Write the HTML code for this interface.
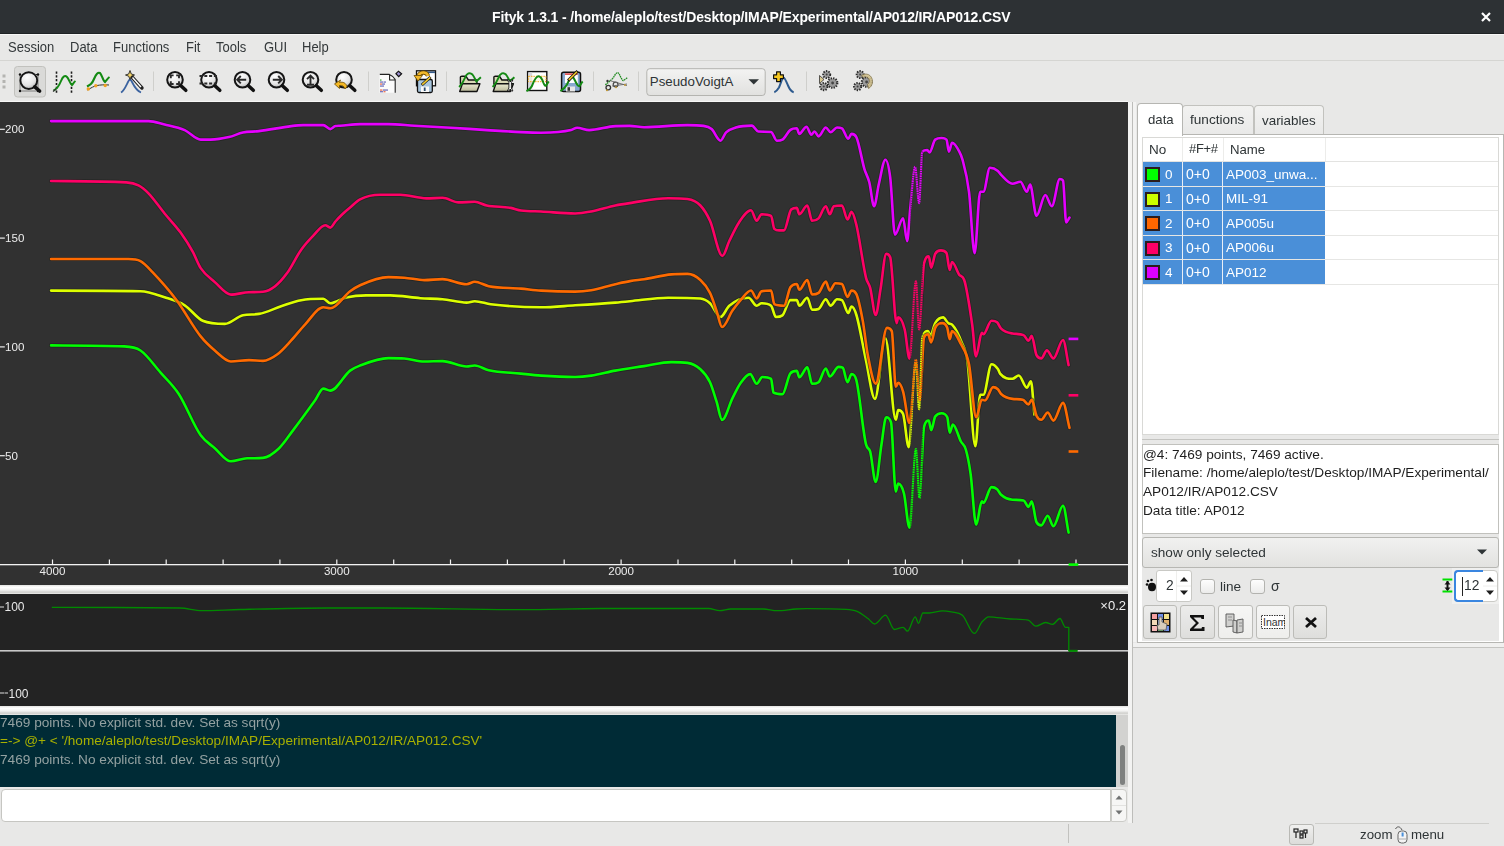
<!DOCTYPE html>
<html><head><meta charset="utf-8"><title>Fityk</title>
<style>
*{box-sizing:border-box;margin:0;padding:0}
html,body{width:1504px;height:846px;overflow:hidden;background:#e8e8e7;font-family:"Liberation Sans",sans-serif;color:#2e3436;position:relative}
.a{position:absolute;white-space:nowrap}
span.a{will-change:transform}
svg text{font-family:"Liberation Sans",sans-serif}
</style></head><body>
<div class="a" style="left:0px;top:0px;width:1504px;height:34px;background:#2d3134"></div>
<div class="a" style="left:0px;top:33px;width:1504px;height:1px;background:#1f2325"></div>
<div class="a" style="left:0px;top:34px;width:1504px;height:1px;background:#f7f7f6"></div>
<span class="a" style="left:492px;top:9.15px;font-size:14px;line-height:16.10px;color:#ffffff;font-weight:bold;letter-spacing:-0.13px;white-space:nowrap">Fityk 1.3.1 - /home/aleplo/test/Desktop/IMAP/Experimental/AP012/IR/AP012.CSV</span>
<svg class="a" style="left:1480px;top:11px" width="12" height="12"><path d="M2,2L10,10M10,2L2,10" stroke="#fff" stroke-width="2.2"/></svg>
<div class="a" style="left:0px;top:60px;width:1504px;height:1px;background:#d5d5d2"></div>
<span class="a" style="left:8px;top:41.27px;font-size:13px;line-height:14.95px;color:#33383a;transform:scaleY(1.14);transform-origin:0 11.98px;">Session</span>
<span class="a" style="left:69.5px;top:41.27px;font-size:13px;line-height:14.95px;color:#33383a;transform:scaleY(1.14);transform-origin:0 11.98px;">Data</span>
<span class="a" style="left:112.5px;top:41.27px;font-size:13px;line-height:14.95px;color:#33383a;transform:scaleY(1.14);transform-origin:0 11.98px;">Functions</span>
<span class="a" style="left:185.5px;top:41.27px;font-size:13px;line-height:14.95px;color:#33383a;transform:scaleY(1.14);transform-origin:0 11.98px;">Fit</span>
<span class="a" style="left:215.5px;top:41.27px;font-size:13px;line-height:14.95px;color:#33383a;transform:scaleY(1.14);transform-origin:0 11.98px;">Tools</span>
<span class="a" style="left:263.5px;top:41.27px;font-size:13px;line-height:14.95px;color:#33383a;transform:scaleY(1.14);transform-origin:0 11.98px;">GUI</span>
<span class="a" style="left:301.5px;top:41.27px;font-size:13px;line-height:14.95px;color:#33383a;transform:scaleY(1.14);transform-origin:0 11.98px;">Help</span>
<svg class="a" style="left:0;top:61px" width="900" height="40" viewBox="0 61 900 40">
<defs><radialGradient id="mg" cx="0.4" cy="0.3" r="0.8"><stop offset="0" stop-color="#ffffff"/><stop offset="0.6" stop-color="#e4e4e4"/><stop offset="1" stop-color="#a8a8a8"/></radialGradient>
<linearGradient id="fold" x1="0" y1="0" x2="0" y2="1"><stop offset="0" stop-color="#ecebd2"/><stop offset="1" stop-color="#b9b89a"/></linearGradient></defs>
<rect x="2.5" y="74.5" width="3" height="3" fill="#b4b4b1"/>
<rect x="2.5" y="80" width="3" height="3" fill="#b4b4b1"/>
<rect x="2.5" y="85.5" width="3" height="3" fill="#b4b4b1"/>
<rect x="14.5" y="66.5" width="31" height="30.5" rx="3" fill="#dadad8" stroke="#c1c1bd" stroke-width="1"/>
<path d="M20,74.5H38V91H20Z" fill="none" stroke="#222" stroke-width="1" stroke-dasharray="1,1"/>
<circle cx="28.8" cy="80.6" r="8.4" fill="url(#mg)" stroke="#151515" stroke-width="1.9"/>
<path d="M34.8,86.8L39.6,91" stroke="#111" stroke-width="3.6" stroke-linecap="round"/>
<circle cx="20" cy="74.5" r="1.2" fill="#111"/>
<circle cx="38" cy="74.5" r="1.2" fill="#111"/>
<circle cx="20" cy="91" r="1.2" fill="#111"/>
<circle cx="38" cy="91" r="1.2" fill="#111"/>
<path d="M56.5,71.5V93M71.5,71.5V93" stroke="#1b1b1b" stroke-width="1.6" stroke-dasharray="2.2,1.6"/>
<path d="M53.5,90.5C57,89 59,86 61,81 C63,76 65,75 67,77 C69,79 70,84 72,85 C73,84 74,82 75.5,81" fill="none" stroke="#138a13" stroke-width="2"/>
<path d="M53,91.5L56,89" stroke="#333" stroke-width="1.2"/>
<path d="M87,86.5C90,85 92,84 94,79 C96,74 98,72 100,73 C102,75 103,81 105,82 C106,81 108,78 109.5,77" fill="none" stroke="#138a13" stroke-width="2.1"/>
<path d="M87.5,90C91,88 94,86 97,85.5 C100,85 104,84.5 109,85" fill="none" stroke="#333" stroke-width="1"/>
<circle cx="88.3" cy="89" r="1.7" fill="#f0a020"/>
<circle cx="95.8" cy="85.8" r="1.7" fill="#f0a020"/>
<circle cx="105.2" cy="85.5" r="1.7" fill="#f0a020"/>
<path d="M121,92.5C124,91 126,86 128,82 C129,79 131,79 132,82 C134,86 137,91 141,92.5" fill="none" stroke="#3b63a0" stroke-width="1.8"/>
<path d="M131.5,76.5L142,88" stroke="#222" stroke-width="3.4" stroke-linecap="round"/><path d="M132.5,77.5L141,87" stroke="#fff" stroke-width="1.4"/>
<path d="M130,70.5L131.3,74 L134.5,75 L131.3,76.2 L130,79.5 L128.7,76.2 L125.5,75 L128.7,74Z" fill="#f6d66a" stroke="#222" stroke-width="0.9"/>
<rect x="153.0" y="71.5" width="1" height="19.5" fill="#cfcfcc"/>
<rect x="368.0" y="71.5" width="1" height="19.5" fill="#cfcfcc"/>
<rect x="446.0" y="71.5" width="1" height="19.5" fill="#cfcfcc"/>
<rect x="593.0" y="71.5" width="1" height="19.5" fill="#cfcfcc"/>
<rect x="638.0" y="71.5" width="1" height="19.5" fill="#cfcfcc"/>
<rect x="806.0" y="71.5" width="1" height="19.5" fill="#cfcfcc"/>
<circle cx="175" cy="79.7" r="7.8" fill="url(#mg)" stroke="#151515" stroke-width="2"/>
<path d="M180.9,85.7L185.8,90.3" stroke="#111" stroke-width="3.5" stroke-linecap="round"/><path d="M170.8,78.2v-2.8h2.8M176.2,75.4h2.8v2.8M179,81.2v2.8h-2.8M173.6,84h-2.8v-2.8" fill="none" stroke="#2a2a2a" stroke-width="1.9"/>
<circle cx="209" cy="79.7" r="7.8" fill="url(#mg)" stroke="#151515" stroke-width="2"/>
<path d="M214.9,85.7L219.8,90.3" stroke="#111" stroke-width="3.5" stroke-linecap="round"/><path d="M199.5,76H218.5M199.5,83.5H218.5" stroke="#2a2a2a" stroke-width="1.8" stroke-dasharray="3,1.8"/>
<circle cx="242.5" cy="79.7" r="7.8" fill="url(#mg)" stroke="#151515" stroke-width="2"/>
<path d="M248.4,85.7L253.3,90.3" stroke="#111" stroke-width="3.5" stroke-linecap="round"/><path d="M246.2,79.7H237.2M240.8,76l-3.6,3.7l3.6,3.7" fill="none" stroke="#2a2a2a" stroke-width="1.9"/>
<circle cx="276.5" cy="79.7" r="7.8" fill="url(#mg)" stroke="#151515" stroke-width="2"/>
<path d="M282.4,85.7L287.3,90.3" stroke="#111" stroke-width="3.5" stroke-linecap="round"/><path d="M272.8,79.7H281.8M278.2,76l3.6,3.7l-3.6,3.7" fill="none" stroke="#2a2a2a" stroke-width="1.9"/>
<circle cx="310.5" cy="79.7" r="7.8" fill="url(#mg)" stroke="#151515" stroke-width="2"/>
<path d="M316.4,85.7L321.3,90.3" stroke="#111" stroke-width="3.5" stroke-linecap="round"/><path d="M310.5,84.5V75.8M307,79.2l3.5,-3.5l3.5,3.5M307,84.8h7" fill="none" stroke="#2a2a2a" stroke-width="1.9"/>
<circle cx="344" cy="79.7" r="7.8" fill="url(#mg)" stroke="#151515" stroke-width="2"/>
<path d="M349.9,85.7L354.8,90.3" stroke="#111" stroke-width="3.5" stroke-linecap="round"/><path d="M347,86.5C346,83 343,81.5 339.5,82.5L340.5,80L334.5,84L339.5,88.5L339.5,85.5C342,85 344,86 345,89Z" fill="#f4b824" stroke="#6b4a00" stroke-width="0.8"/>
<path d="M379.5,74.5H389.5C392,75.5 394,77 395.2,79.5V92.8H379.5Z" fill="#fbfbfb"/>
<path d="M379.8,74.4H389.4C392,75.5 394,77 395.2,79.5V92.8M389.6,74.6V80H395.2" fill="none" stroke="#222" stroke-width="1.1"/>
<rect x="380" y="79.5" width="1.5" height="1.1" fill="#2a9a2a"/>
<rect x="380" y="81.5" width="3.5" height="1.1" fill="#5a5ab0"/>
<rect x="384" y="81.5" width="2" height="1.1" fill="#5a5ab0"/>
<rect x="380" y="83.5" width="2" height="1.1" fill="#e85a30"/>
<rect x="382" y="83.5" width="3" height="1.1" fill="#5a5ab0"/>
<rect x="380" y="85.5" width="4" height="1.1" fill="#5a5ab0"/>
<rect x="380" y="89.5" width="2.5" height="1.1" fill="#e85a30"/>
<rect x="383" y="89.5" width="5" height="1.1" fill="#5a5ab0"/>
<rect x="380" y="91.2" width="3" height="1.1" fill="#5a5ab0"/>
<rect x="383.5" y="91.2" width="2" height="1.1" fill="#e85a30"/>
<path d="M396,73.7L398.5,71.2L401.6,73.7L398.7,76.6Z" fill="#9b8fd0" stroke="#111" stroke-width="1.2"/>
<rect x="416.5" y="70.8" width="19" height="15" fill="#fff" stroke="#111" stroke-width="1.3"/><rect x="427" y="71.5" width="8" height="1.6" fill="#345a8a"/>
<rect x="417.5" y="79.5" width="14.8" height="13" rx="1.5" fill="#a9c6de" stroke="#111" stroke-width="1.3"/><rect x="421" y="86.5" width="8" height="5.5" fill="#fafafa"/><rect x="423.8" y="87.5" width="1.8" height="3.5" fill="#2a4a6a"/>
<path d="M428,76C427,72 421,71 418.5,75.5" fill="none" stroke="#6a4a00" stroke-width="4.2"/><path d="M428,76C427,72 421,71 418.5,75.5" fill="none" stroke="#f2b92a" stroke-width="2.6"/><path d="M414,75.5L422.5,75.5L418,81Z" fill="#f2b92a" stroke="#6a4a00" stroke-width="0.8"/>
<path d="M421.8,85L430.5,77" stroke="#111" stroke-width="3"/><path d="M422.2,84.6L430.2,77.4" stroke="#f5cc30" stroke-width="1.6"/>
<path d="M460.4,77Q460.4,76.2 461.9,76.2H465.9L468.4,80H476.9V84H460.4Z" fill="#d9d8b6" stroke="#111" stroke-width="1.4" stroke-linejoin="round"/><path d="M462.4,83.7H479.9L476.9,91.5H459.7Z" fill="url(#fold)" stroke="#111" stroke-width="1.4" stroke-linejoin="round"/><path d="M459.09999999999997,87C460.9,85 462.9,83 464.9,78 C466.9,73 469.9,72 472.4,74.5 C474.4,77 475.4,80 476.4,81.4 C477.9,80 479.4,78.5 480.9,77.3" fill="none" stroke="#148a14" stroke-width="2"/>
<path d="M493.9,77Q493.9,76.2 495.4,76.2H499.4L501.9,80H510.4V84H493.9Z" fill="#d9d8b6" stroke="#111" stroke-width="1.4" stroke-linejoin="round"/><path d="M495.9,83.7H513.4L510.4,91.5H493.2Z" fill="url(#fold)" stroke="#111" stroke-width="1.4" stroke-linejoin="round"/><path d="M492.59999999999997,87C494.4,85 496.4,83 498.4,78 C500.4,73 503.4,72 505.9,74.5 C507.9,77 508.9,80 509.9,81.4 C511.4,80 512.9,78.5 514.4,77.3" fill="none" stroke="#148a14" stroke-width="2"/><path d="M507.4,80L508.9,82.5V88L507.4,91H508.9L510.2,89L511.4,91H512.9L511.4,88V82.5L512.9,80H511.4L510.2,82L508.9,80Z" fill="#fff" stroke="#111" stroke-width="0.9"/>
<rect x="527.6" y="71.6" width="19.2" height="18.9" fill="#fff" stroke="#111" stroke-width="1.4"/><rect x="528.4" y="72.4" width="3.8" height="17.3" fill="#d8d8dc"/>
<rect x="528.4" y="76.3" width="17.6" height="5.4" fill="#fff6d8" fill-opacity="0.5" stroke="#f0a818" stroke-width="1" stroke-dasharray="1.5,1"/>
<path d="M526.4,91.2C529,90 530.5,89 532,86 C533.5,82 535.5,76 538.8,76.2 C541,76.5 542.5,80 543.5,83 C544.5,85.5 545.5,86 546,85.6 C547,84.5 548,82.5 548.7,81.4" fill="none" stroke="#148a14" stroke-width="2"/>
<rect x="561.6" y="72.3" width="18.9" height="19.3" rx="2" fill="#88a8d0" stroke="#111" stroke-width="1.5"/><rect x="565" y="73.2" width="12.8" height="9.8" fill="#fff"/><rect x="565" y="73.2" width="12.8" height="1.8" fill="#e05a5a"/><rect x="566" y="86.5" width="9" height="5" fill="#e8e8e8"/><rect x="567.5" y="87.2" width="2.5" height="3.6" fill="#333"/>
<path d="M560.4,91.2C563,89.5 565,88 567,84.5 C569,80 571,77 572.5,77 C574,77.5 575,81 576.5,83.5 C577.5,85.5 578.5,86.5 579.5,86 C580.5,85 581.5,82.5 582.7,81.4" fill="none" stroke="#148a14" stroke-width="2"/>
<path d="M568.1,80.6L577.6,71.1" stroke="#111" stroke-width="3"/><path d="M568.8,79.9L577,71.7" stroke="#f5c828" stroke-width="1.5"/>
<path d="M605.4,85C608,82.5 610,81 612.7,78.4 C614.5,76 616,72.6 617.8,72.6 C619.5,73 621,79 623,80.6 C624.5,80 626,78.5 627.7,77.7" fill="none" stroke="#1e8a1e" stroke-width="1.3" stroke-dasharray="1.6,0.6"/>
<circle cx="608.3" cy="87.6" r="2.3" fill="none" stroke="#333" stroke-width="1.3"/><circle cx="615.6" cy="84.5" r="2.4" fill="none" stroke="#444" stroke-width="1.2"/><path d="M609.5,80.5L627,85.5M612,86L627,84" stroke="#666" stroke-width="0.9"/><circle cx="607.5" cy="81" r="1.2" fill="#333"/>
<rect x="606" y="89.5" width="2" height="1.6" fill="#c09a40"/><rect x="624" y="84.2" width="2" height="1.6" fill="#c09a40"/><rect x="615" y="86.5" width="2" height="1.6" fill="#c09a40"/>
<rect x="646.8" y="68.7" width="118.4" height="26.8" rx="3" fill="url(#cmb)" stroke="#b4b4b0" stroke-width="1"/>
<defs><linearGradient id="cmb" x1="0" y1="0" x2="0" y2="1"><stop offset="0" stop-color="#f3f3f2"/><stop offset="1" stop-color="#e1e1df"/></linearGradient></defs>
<text x="649.8" y="86.2" font-size="13.3" fill="#2e3436">PseudoVoigtA</text>
<path d="M748.5,79.2h10.5l-5.25,5.2z" fill="#2e3436"/>
<path d="M774.3,92.2C776.5,91.5 777.5,90 779,87.5 C780.5,84.5 782,78 783.6,77.6 C785,78 786.5,82 788,85.5 C789.5,89 791.5,91.8 793.7,92.2" fill="none" stroke="#2d5a8e" stroke-width="2"/>
<path d="M776.6,71.8h3.8v3h3v3.8h-3v3h-3.8v-3h-3v-3.8h3z" fill="#f6c820" stroke="#111" stroke-width="1.2" stroke-linejoin="round"/>
<path d="M819.5,75.5L824,79.5L819.5,83.5Z" fill="#d8c890" stroke="#333" stroke-width="0.8"/>
<circle cx="826.7" cy="74.6" r="3.3" fill="#8c8c8c" stroke="#2a2a2a" stroke-width="2.4" stroke-dasharray="1.3,1.1"/><circle cx="826.7" cy="74.6" r="2.64" fill="#9a9a9a"/><circle cx="826.7" cy="74.6" r="0.99" fill="#444"/><circle cx="823.8" cy="86.6" r="3.4" fill="#8c8c8c" stroke="#2a2a2a" stroke-width="2.4" stroke-dasharray="1.3,1.1"/><circle cx="823.8" cy="86.6" r="2.72" fill="#9a9a9a"/><circle cx="823.8" cy="86.6" r="1.02" fill="#444"/><circle cx="832.6" cy="83" r="4.6" fill="#8c8c8c" stroke="#2a2a2a" stroke-width="2.4" stroke-dasharray="1.3,1.1"/><circle cx="832.6" cy="83" r="3.68" fill="#9a9a9a"/><circle cx="832.6" cy="83" r="1.38" fill="#444"/>
<circle cx="860.2" cy="74.6" r="3.3" fill="#8c8c8c" stroke="#2a2a2a" stroke-width="2.4" stroke-dasharray="1.3,1.1"/><circle cx="860.2" cy="74.6" r="2.64" fill="#9a9a9a"/><circle cx="860.2" cy="74.6" r="0.99" fill="#444"/><circle cx="857.6" cy="86.6" r="3.4" fill="#8c8c8c" stroke="#2a2a2a" stroke-width="2.4" stroke-dasharray="1.3,1.1"/><circle cx="857.6" cy="86.6" r="2.72" fill="#9a9a9a"/><circle cx="857.6" cy="86.6" r="1.02" fill="#444"/><circle cx="866.6" cy="82" r="4.6" fill="#8c8c8c" stroke="#2a2a2a" stroke-width="2.4" stroke-dasharray="1.3,1.1"/><circle cx="866.6" cy="82" r="3.68" fill="#9a9a9a"/><circle cx="866.6" cy="82" r="1.38" fill="#444"/>
<path d="M861.5,75.5C866,72 872.5,75 872.5,81.5 C872.5,85 870.5,87.5 868.5,88.5L867.5,84.5C869.5,83 870,80.5 868.5,78.5 C867,76.5 864.5,76.5 863,77.5Z" fill="#d2c290" fill-opacity="0.9" stroke="#6a5a30" stroke-width="0.6"/>
</svg>
<div class="a" style="left:0px;top:101px;width:1128px;height:1px;background:#f6f6f5"></div>
<div class="a" style="left:0px;top:102px;width:1128px;height:483px;background:#313131"></div>
<div class="a" style="left:0px;top:585px;width:1128px;height:9px;background:linear-gradient(#e2e2e0,#ffffff 25%,#f2f2f1 55%,#cfcfcc 80%,#ededeb)"></div>
<div class="a" style="left:0px;top:594px;width:1128px;height:112px;background:#232323"></div>
<div class="a" style="left:0px;top:706px;width:1128px;height:9px;background:linear-gradient(#e2e2e0,#ffffff 25%,#f2f2f1 55%,#cfcfcc 80%,#ededeb)"></div>
<div class="a" style="left:0px;top:715px;width:1116px;height:72px;background:#002b36"></div>
<span class="a" style="left:0px;top:714.77px;font-size:13.65px;line-height:15.70px;color:#93a1a1;white-space:nowrap">7469 points. No explicit std. dev. Set as sqrt(y)</span>
<span class="a" style="left:0px;top:733.22px;font-size:13.6px;line-height:15.64px;color:#a7b000;white-space:nowrap">=-&gt; @+ &lt; '/home/aleplo/test/Desktop/IMAP/Experimental/AP012/IR/AP012.CSV'</span>
<span class="a" style="left:0px;top:751.97px;font-size:13.65px;line-height:15.70px;color:#93a1a1;white-space:nowrap">7469 points. No explicit std. dev. Set as sqrt(y)</span>
<div class="a" style="left:1116px;top:715px;width:12px;height:72px;background:#d2d2d0"></div>
<div class="a" style="left:1120px;top:745px;width:5px;height:40px;background:#7e807f;border-radius:3px"></div>
<div class="a" style="left:1px;top:789px;width:1110px;height:33px;background:#fff;border:1px solid #c6c6c2;border-radius:4px 0 0 4px"></div>
<div class="a" style="left:1111px;top:789px;width:16px;height:33px;background:#f6f6f5;border:1px solid #cbcbc7;border-radius:0 4px 4px 0"></div>
<svg class="a" style="left:1111px;top:789px" width="16" height="33"><path d="M4.5,10.5h7l-3.5,-4z M4.5,21.5h7l-3.5,4z" fill="#707272"/><path d="M1,16.5h14" stroke="#e2e2e0" stroke-width="1"/></svg>
<div class="a" style="left:1128px;top:102px;width:4px;height:721px;background:#f3f3f2"></div>
<div class="a" style="left:1132px;top:102px;width:1px;height:721px;background:#bdbdba"></div>
<div class="a" style="left:1133px;top:102px;width:3px;height:540px;background:#f3f3f2"></div>
<div class="a" style="left:1068px;top:824px;width:1px;height:19px;background:#c2c2bf"></div>
<div class="a" style="left:1315px;top:822.5px;width:174px;height:1.2px;background:#cfcfcc"></div>
<div class="a" style="left:1288.5px;top:823.5px;width:25px;height:21px;background:linear-gradient(#f0f0ef,#dcdcda);border:1px solid #b9b9b5;border-radius:3px"></div>
<svg class="a" style="left:1292px;top:828px" width="18" height="12"><g fill="none" stroke="#222" stroke-width="1.2"><rect x="2" y="1" width="4" height="3"/><path d="M4,4v6"/><rect x="8" y="3" width="3" height="3"/><rect x="8" y="7" width="3" height="3"/><rect x="12" y="2" width="3" height="3"/><path d="M13.5,5v5"/></g></svg>
<span class="a" style="left:1359.7px;top:826.59px;font-size:13.3px;line-height:15.29px;color:#2e3436;">zoom</span>
<span class="a" style="left:1411px;top:826.59px;font-size:13.3px;line-height:15.29px;color:#2e3436;">menu</span>
<svg class="a" style="left:1394px;top:826px" width="15" height="18"><path d="M1.5,3 C3,0 6,0 8,4" fill="none" stroke="#555" stroke-width="1"/><rect x="4" y="5" width="9" height="12" rx="3.5" fill="#f4f4f4" stroke="#666" stroke-width="1"/><rect x="7.6" y="6.5" width="2" height="4" fill="#4a90d9"/><path d="M4.5,13h8" stroke="#999" stroke-width="0.8"/></svg>
<div class="a" style="left:1137px;top:134px;width:367px;height:509px;background:#fff;border:1px solid #b6b6b2"></div>
<div class="a" style="left:1142px;top:137px;width:357px;height:504px;background:#e8e8e7"></div>
<div class="a" style="left:1182px;top:105px;width:72px;height:29px;background:linear-gradient(#f2f2f1,#e9e9e8);border:1px solid #c2c2be;border-bottom:none;border-radius:4px 4px 0 0"></div>
<div class="a" style="left:1254px;top:105px;width:70px;height:29px;background:linear-gradient(#f2f2f1,#e9e9e8);border:1px solid #c2c2be;border-bottom:none;border-radius:4px 4px 0 0"></div>
<div class="a" style="left:1137px;top:103px;width:46px;height:33px;background:#fff;border:1px solid #b6b6b2;border-bottom:none;border-radius:4px 4px 0 0"></div>
<span class="a" style="left:1148.4px;top:112.09px;font-size:13.2px;line-height:15.18px;color:#2e3436;">data</span>
<span class="a" style="left:1190.4px;top:112.22px;font-size:13.6px;line-height:15.64px;color:#2e3436;">functions</span>
<span class="a" style="left:1262.4px;top:112.80px;font-size:13.4px;line-height:15.41px;color:#2e3436;">variables</span>
<div class="a" style="left:1142px;top:137px;width:357px;height:298px;background:#fff;border:1px solid #d9d9d6"></div>
<div class="a" style="left:1143px;top:161px;width:355px;height:1px;background:#e3e3e1"></div>
<div class="a" style="left:1182px;top:138px;width:1px;height:23px;background:#ececea"></div>
<div class="a" style="left:1223px;top:138px;width:1px;height:23px;background:#ececea"></div>
<div class="a" style="left:1325px;top:138px;width:1px;height:23px;background:#ececea"></div>
<span class="a" style="left:1148.8px;top:141.61px;font-size:13.5px;line-height:15.52px;color:#2e3436;">No</span>
<span class="a" style="left:1189.4px;top:142.07px;font-size:13.0px;line-height:14.95px;color:#2e3436;letter-spacing:-0.3px">#F+#</span>
<span class="a" style="left:1229.8px;top:141.89px;font-size:13.2px;line-height:15.18px;color:#2e3436;">Name</span>
<div class="a" style="left:1143px;top:162px;width:182px;height:23.5px;background:#4a8fd8"></div>
<div class="a" style="left:1143px;top:185.5px;width:355px;height:1px;background:#e6e6e4"></div>
<div class="a" style="left:1181.5px;top:162px;width:1.2px;height:23.5px;background:#e8eef6"></div>
<div class="a" style="left:1222.2px;top:162px;width:1.2px;height:23.5px;background:#e8eef6"></div>
<div class="a" style="left:1145px;top:167px;width:15px;height:15px;background:#00ff00;border:2px solid #2b1c1c"></div>
<span class="a" style="left:1164.8px;top:166.51px;font-size:13.5px;line-height:15.52px;color:#ffffff;">0</span>
<span class="a" style="left:1185.8px;top:166.05px;font-size:14px;line-height:16.10px;color:#ffffff;">0+0</span>
<span class="a" style="left:1226px;top:166.51px;font-size:13.5px;line-height:15.52px;color:#ffffff;">AP003_unwa...</span>
<div class="a" style="left:1143px;top:186.5px;width:182px;height:23.5px;background:#4a8fd8"></div>
<div class="a" style="left:1143px;top:210.0px;width:355px;height:1px;background:#e6e6e4"></div>
<div class="a" style="left:1181.5px;top:186.5px;width:1.2px;height:23.5px;background:#e8eef6"></div>
<div class="a" style="left:1222.2px;top:186.5px;width:1.2px;height:23.5px;background:#e8eef6"></div>
<div class="a" style="left:1145px;top:191.5px;width:15px;height:15px;background:#ccff00;border:2px solid #2b1c1c"></div>
<span class="a" style="left:1164.8px;top:191.01px;font-size:13.5px;line-height:15.52px;color:#ffffff;">1</span>
<span class="a" style="left:1185.8px;top:190.55px;font-size:14px;line-height:16.10px;color:#ffffff;">0+0</span>
<span class="a" style="left:1226px;top:191.01px;font-size:13.5px;line-height:15.52px;color:#ffffff;">MIL-91</span>
<div class="a" style="left:1143px;top:211px;width:182px;height:23.5px;background:#4a8fd8"></div>
<div class="a" style="left:1143px;top:234.5px;width:355px;height:1px;background:#e6e6e4"></div>
<div class="a" style="left:1181.5px;top:211px;width:1.2px;height:23.5px;background:#e8eef6"></div>
<div class="a" style="left:1222.2px;top:211px;width:1.2px;height:23.5px;background:#e8eef6"></div>
<div class="a" style="left:1145px;top:216px;width:15px;height:15px;background:#ff6600;border:2px solid #2b1c1c"></div>
<span class="a" style="left:1164.8px;top:215.51px;font-size:13.5px;line-height:15.52px;color:#ffffff;">2</span>
<span class="a" style="left:1185.8px;top:215.05px;font-size:14px;line-height:16.10px;color:#ffffff;">0+0</span>
<span class="a" style="left:1226px;top:215.51px;font-size:13.5px;line-height:15.52px;color:#ffffff;">AP005u</span>
<div class="a" style="left:1143px;top:235.5px;width:182px;height:23.5px;background:#4a8fd8"></div>
<div class="a" style="left:1143px;top:259.0px;width:355px;height:1px;background:#e6e6e4"></div>
<div class="a" style="left:1181.5px;top:235.5px;width:1.2px;height:23.5px;background:#e8eef6"></div>
<div class="a" style="left:1222.2px;top:235.5px;width:1.2px;height:23.5px;background:#e8eef6"></div>
<div class="a" style="left:1145px;top:240.5px;width:15px;height:15px;background:#ff0066;border:2px solid #2b1c1c"></div>
<span class="a" style="left:1164.8px;top:240.01px;font-size:13.5px;line-height:15.52px;color:#ffffff;">3</span>
<span class="a" style="left:1185.8px;top:239.55px;font-size:14px;line-height:16.10px;color:#ffffff;">0+0</span>
<span class="a" style="left:1226px;top:240.01px;font-size:13.5px;line-height:15.52px;color:#ffffff;">AP006u</span>
<div class="a" style="left:1143px;top:260px;width:182px;height:23.5px;background:#4a8fd8"></div>
<div class="a" style="left:1143px;top:283.5px;width:355px;height:1px;background:#e6e6e4"></div>
<div class="a" style="left:1181.5px;top:260px;width:1.2px;height:23.5px;background:#e8eef6"></div>
<div class="a" style="left:1222.2px;top:260px;width:1.2px;height:23.5px;background:#e8eef6"></div>
<div class="a" style="left:1145px;top:265px;width:15px;height:15px;background:#dd00ff;border:2px solid #2b1c1c"></div>
<span class="a" style="left:1164.8px;top:264.51px;font-size:13.5px;line-height:15.52px;color:#ffffff;">4</span>
<span class="a" style="left:1185.8px;top:264.05px;font-size:14px;line-height:16.10px;color:#ffffff;">0+0</span>
<span class="a" style="left:1226px;top:264.51px;font-size:13.5px;line-height:15.52px;color:#ffffff;">AP012</span>
<div class="a" style="left:1142px;top:439px;width:357px;height:1px;background:#c4c4c1"></div>
<div class="a" style="left:1142px;top:444px;width:357px;height:90px;background:#fff;border:1px solid #c1c1bd"></div>
<span class="a" style="left:1143px;top:446.57px;font-size:13.65px;line-height:15.70px;color:#1e1e1e;white-space:nowrap">@4: 7469 points, 7469 active.</span>
<span class="a" style="left:1143px;top:465.37px;font-size:13.65px;line-height:15.70px;color:#1e1e1e;white-space:nowrap">Filename: /home/aleplo/test/Desktop/IMAP/Experimental/</span>
<span class="a" style="left:1143px;top:483.97px;font-size:13.65px;line-height:15.70px;color:#1e1e1e;white-space:nowrap">AP012/IR/AP012.CSV</span>
<span class="a" style="left:1143px;top:502.57px;font-size:13.65px;line-height:15.70px;color:#1e1e1e;white-space:nowrap">Data title: AP012</span>
<div class="a" style="left:1142px;top:536.5px;width:357px;height:31px;background:linear-gradient(#f1f1f0,#e2e2e0);border:1px solid #b7b7b3;border-radius:3px"></div>
<span class="a" style="left:1150.6px;top:545.12px;font-size:13.6px;line-height:15.64px;color:#2e3436;">show only selected</span>
<svg class="a" style="left:1476px;top:548px" width="12" height="8"><path d="M1,1.5h10l-5,5z" fill="#2e3436"/></svg>
<svg class="a" style="left:1145px;top:578px" width="12" height="15"><circle cx="3" cy="3" r="1.3" fill="#111"/><circle cx="6.5" cy="2" r="1.3" fill="#111"/><circle cx="2" cy="6.5" r="1.3" fill="#111"/><ellipse cx="7" cy="9" rx="4" ry="4.2" fill="#111"/></svg>
<div class="a" style="left:1156px;top:570px;width:36px;height:32px;background:#fff;border:1px solid #c9c9c5;border-radius:3px"></div>
<div class="a" style="left:1176px;top:571px;width:1px;height:30px;background:#efefed"></div>
<span class="a" style="left:1166px;top:578.33px;font-size:13.8px;line-height:15.87px;color:#2e3436;">2</span>
<svg class="a" style="left:1177px;top:571px" width="14" height="30"><path d="M3,10.5h8l-4,-4.5z M3,19.5h8l-4,4.5z" fill="#1e1e1e"/><path d="M0,15h14" stroke="#eeeeec"/></svg>
<div class="a" style="left:1199.5px;top:578.5px;width:15px;height:15px;background:linear-gradient(#fdfdfd,#ececeb);border:1px solid #b3b3af;border-radius:3px"></div>
<span class="a" style="left:1220.3px;top:578.82px;font-size:13.6px;line-height:15.64px;color:#2e3436;">line</span>
<div class="a" style="left:1250px;top:578.5px;width:15px;height:15px;background:linear-gradient(#fdfdfd,#ececeb);border:1px solid #b3b3af;border-radius:3px"></div>
<span class="a" style="left:1270.5px;top:578.45px;font-size:14px;line-height:16.10px;color:#2e3436;">σ</span>
<svg class="a" style="left:1442px;top:578px" width="11" height="16"><path d="M0.5,1.5h10M0.5,13.5h10" stroke="#00e000" stroke-width="2.2"/><path d="M5.5,3v9" stroke="#111" stroke-width="2"/><path d="M2.5,6.5l3,-3.5l3,3.5z M2.5,9.5l3,3.5l3,-3.5z" fill="#111"/></svg>
<div class="a" style="left:1452px;top:568px;width:47px;height:36px;background:#fff;opacity:0.35"></div>
<div class="a" style="left:1453.5px;top:570px;width:44.5px;height:32px;background:#fff;border:1px solid #cacac6;border-radius:4px"></div>
<div class="a" style="left:1453.5px;top:570px;width:29px;height:32px;border:2px solid #3a86e0;border-right:none;border-radius:4px 0 0 4px"></div>
<div class="a" style="left:1462.2px;top:577px;width:1.2px;height:19px;background:#222"></div>
<span class="a" style="left:1463.5px;top:578.33px;font-size:13.8px;line-height:15.87px;color:#2e3436;">12</span>
<svg class="a" style="left:1483px;top:571px" width="14" height="30"><path d="M3,10.5h8l-4,-4.5z M3,19.5h8l-4,4.5z" fill="#1e1e1e"/><path d="M0,15h14" stroke="#eeeeec"/></svg>
<div class="a" style="left:1142.8px;top:604.8px;width:34.6px;height:34.6px;background:linear-gradient(#ececeb,#dededc);border:1px solid #bcbcb8;border-radius:3px"></div>
<div class="a" style="left:1180px;top:604.8px;width:34.8px;height:34.6px;background:linear-gradient(#ececeb,#dededc);border:1px solid #bcbcb8;border-radius:3px"></div>
<div class="a" style="left:1217.7px;top:604.8px;width:34.9px;height:34.6px;background:linear-gradient(#f6f6f5,#eeeeec);border:1px solid #bcbcb8;border-radius:3px"></div>
<div class="a" style="left:1255.6px;top:604.8px;width:34.7px;height:34.6px;background:linear-gradient(#f6f6f5,#eeeeec);border:1px solid #bcbcb8;border-radius:3px"></div>
<div class="a" style="left:1293.1px;top:604.8px;width:34.4px;height:34.6px;background:linear-gradient(#ececeb,#dededc);border:1px solid #bcbcb8;border-radius:3px"></div>
<svg class="a" style="left:1150px;top:612px" width="22" height="22"><rect x="0.5" y="0.5" width="20" height="20" fill="#111"/>
<rect x="2" y="2" width="5" height="5" fill="#f4a0a0"/><rect x="8" y="2" width="5" height="5" fill="#6f8fe8"/><rect x="14" y="2" width="5" height="5" fill="#f2e08a"/>
<rect x="2" y="8" width="5" height="5" fill="#f2d8b8"/><rect x="8" y="8" width="5" height="5" fill="#a6b6e6"/><rect x="14" y="8" width="5" height="5" fill="#e0b070"/>
<rect x="2" y="14" width="5" height="5" fill="#f6b8b8"/><rect x="8" y="14" width="5" height="5" fill="#70c070"/><rect x="14" y="14" width="5" height="5" fill="#6f8fe8"/>
<path d="M9,5 v8 l-2,0 l1,5 h8 l1,-6 l-5,-2 v-5z" fill="#d8cdbd" stroke="#555" stroke-width="0.8"/></svg>
<svg class="a" style="left:1187px;top:613px" width="20" height="20"><path d="M3,2h14v4h-2.5l-0.5,-1.5h-7.5l5.5,5.5l-5.5,5.5h8l0.5,-1.5h2.5v4h-14.5v-2l6,-6l-6,-6z" fill="#111"/></svg>
<svg class="a" style="left:1224px;top:611px" width="22" height="24"><g fill="#d0d0ce" stroke="#555" stroke-width="0.9"><path d="M2,3l8,0l0,12l-8,1z"/><path d="M9,9l4,1l0,12l-4,-1z"/><path d="M13,9l6,-1l0,13l-6,1z"/></g><path d="M4,6h4M4,9h4M15,12h3M15,15h3" stroke="#777" stroke-width="0.7"/></svg>
<svg class="a" style="left:1261px;top:614px" width="24" height="16"><rect x="0.5" y="1.5" width="23" height="13" fill="#fff" stroke="#333" stroke-width="1" stroke-dasharray="1.5,1"/><text x="2" y="12" font-size="10.5" font-family="Liberation Serif" fill="#333">Inam</text></svg>
<svg class="a" style="left:1304px;top:616px" width="14" height="13"><path d="M2,2L12,11M12,2L2,11" stroke="#111" stroke-width="2.8"/></svg>
<div class="a" style="left:1133px;top:643px;width:371px;height:4px;background:#f0f0ef"></div>
<div class="a" style="left:1133px;top:647px;width:371px;height:1px;background:#c4c4c1"></div>
<svg class="a" style="left:0;top:0" width="1128" height="710" viewBox="0 0 1128 710">
<defs><clipPath id="cpa"><path d="M0,0H910.5V710H0Z M922.8,0H1128V710H922.8Z"/></clipPath><clipPath id="cpb"><rect x="910.5" y="0" width="12.3" height="710"/></clipPath></defs>
<rect x="0" y="564" width="1128" height="1.3" fill="#f2f2f2"/>
<path d="M52.5,559.6v4.5M109.4,559.6v4.5M166.2,559.6v4.5M223.1,559.6v4.5M279.9,559.6v4.5M336.8,559.6v4.5M393.7,559.6v4.5M450.5,559.6v4.5M507.4,559.6v4.5M564.2,559.6v4.5M621.1,559.6v4.5M678.0,559.6v4.5M734.8,559.6v4.5M791.7,559.6v4.5M848.5,559.6v4.5M905.4,559.6v4.5M962.3,559.6v4.5M1019.1,559.6v4.5M1076.0,559.6v4.5" stroke="#f2f2f2" stroke-width="1.2" fill="none"/>
<text x="52.5" y="575" text-anchor="middle" font-size="11.6" fill="#ececec" font-family="Liberation Sans">4000</text>
<text x="336.8" y="575" text-anchor="middle" font-size="11.6" fill="#ececec" font-family="Liberation Sans">3000</text>
<text x="621.1" y="575" text-anchor="middle" font-size="11.6" fill="#ececec" font-family="Liberation Sans">2000</text>
<text x="905.4" y="575" text-anchor="middle" font-size="11.6" fill="#ececec" font-family="Liberation Sans">1000</text>
<rect x="0" y="128.7" width="4.8" height="1.2" fill="#ececec"/>
<text x="5" y="133.4" font-size="11.6" fill="#ececec" font-family="Liberation Sans">200</text>
<rect x="0" y="237.5" width="4.8" height="1.2" fill="#ececec"/>
<text x="5" y="242.2" font-size="11.6" fill="#ececec" font-family="Liberation Sans">150</text>
<rect x="0" y="346.3" width="4.8" height="1.2" fill="#ececec"/>
<text x="5" y="351.0" font-size="11.6" fill="#ececec" font-family="Liberation Sans">100</text>
<rect x="0" y="455.1" width="4.8" height="1.2" fill="#ececec"/>
<text x="5" y="459.8" font-size="11.6" fill="#ececec" font-family="Liberation Sans">50</text>
<g clip-path="url(#cpa)"><path d="M51.1,345.4 C75.5,345.5 100.0,345.4 124.4,346.4 C129.8,346.6 135.1,346.9 140.5,350.5 C147.2,355.0 153.9,365.0 160.6,372.6 C166.6,379.4 172.6,384.5 178.6,393.7 C186.0,404.9 193.3,424.9 200.7,435.2 C205.4,441.8 210.1,444.1 214.8,448.2 C220.2,452.9 225.5,461.3 230.9,461.3 C236.3,461.3 241.6,458.4 247.0,458.3 C252.3,458.2 257.7,458.3 263.0,457.9 C268.4,457.5 273.7,453.3 279.1,448.2 C283.8,443.8 288.5,436.3 293.2,430.1 C300.6,420.4 307.9,410.3 315.3,400.0 C318.0,396.3 320.6,388.6 323.3,388.6 C325.6,388.6 328.0,390.6 330.3,390.6 C336.9,390.6 343.5,375.6 350.1,370.6 C353.4,368.1 356.8,366.8 360.1,365.5 C369.5,361.9 378.9,358.1 388.3,358.1 C393.6,358.1 399.0,358.1 404.3,358.5 C411.0,359.0 417.7,361.5 424.4,361.5 C430.4,361.5 436.5,361.1 442.5,361.1 C450.5,361.1 458.6,366.5 466.6,366.5 C469.3,366.5 472.0,365.5 474.7,365.5 C479.4,365.5 484.0,369.2 488.7,370.2 C499.4,372.6 510.2,372.5 520.9,373.6 C527.6,374.3 534.3,375.1 541.0,375.6 C552.4,376.4 563.7,377.0 575.1,377.0 C580.5,377.0 585.8,376.4 591.2,375.6 C599.2,374.4 607.3,372.1 615.3,370.6 C624.9,368.9 634.5,367.6 644.1,366.1 C653.2,364.7 662.3,362.1 671.4,362.1 C676.8,362.1 682.1,362.1 687.5,362.9 C691.8,363.5 696.1,365.3 700.4,369.3 C703.6,372.2 706.8,375.3 710.0,382.2 C712.2,386.9 714.3,394.6 716.5,401.4 C718.4,407.2 720.2,419.9 722.1,419.9 C725.6,419.9 729.0,405.1 732.5,398.2 C735.2,392.8 737.9,386.8 740.6,383.0 C743.8,378.5 747.0,374.1 750.2,374.1 C752.4,374.1 754.5,383.8 756.7,383.8 C758.6,383.8 760.4,377.0 762.3,377.0 C765.2,377.0 768.2,377.0 771.1,378.9 C771.9,379.4 772.7,392.2 773.5,392.6 C776.5,394.2 779.4,394.2 782.4,394.2 C785.1,394.2 787.7,376.3 790.4,373.3 C792.5,370.9 794.7,370.9 796.8,370.9 C797.6,370.9 798.5,377.3 799.3,377.3 C802.0,377.3 804.6,367.4 807.3,367.4 C808.9,367.4 810.5,383.8 812.1,383.8 C814.3,383.8 816.4,383.8 818.6,382.2 C821.0,380.4 823.4,368.5 825.8,368.5 C827.1,368.5 828.5,376.5 829.8,376.5 C832.7,376.5 835.7,366.9 838.6,366.9 C840.0,366.9 841.3,366.9 842.7,367.7 C844.3,368.6 845.9,382.2 847.5,382.2 C848.8,382.2 850.2,374.1 851.5,374.1 C853.1,374.1 854.8,374.1 856.4,380.4 C859.6,392.9 862.9,432.4 866.1,444.7 C867.4,449.8 868.8,447.0 870.1,451.4 C872.0,457.5 873.8,482.0 875.7,482.0 C877.6,482.0 879.5,456.6 881.4,445.0 C883.0,435.2 884.6,417.3 886.2,417.3 C887.8,417.3 889.4,417.3 891.0,422.2 C892.6,427.1 894.2,491.6 895.8,491.6 C896.6,491.6 897.4,483.6 898.2,483.6 C900.1,483.6 902.0,485.7 903.9,493.2 C905.8,500.5 907.6,527.8 909.5,527.8 C911.6,527.8 913.8,449.0 915.9,449.0 C917.1,449.0 918.3,498.1 919.5,498.1 C921.0,498.1 922.5,433.0 924.0,427.0 C925.6,420.6 927.2,420.6 928.8,420.6 C929.6,420.6 930.4,430.2 931.2,430.2 C932.5,430.2 933.9,418.5 935.2,416.5 C937.3,413.3 939.5,413.3 941.6,413.3 C943.5,413.3 945.4,413.3 947.3,417.3 C948.1,419.0 948.9,432.6 949.7,432.6 C950.8,432.6 951.8,424.6 952.9,424.6 C955.6,424.6 958.2,436.5 960.9,441.5 C962.5,444.6 964.2,444.0 965.8,449.5 C967.4,454.9 969.0,462.6 970.6,473.9 C972.5,487.1 974.3,524.6 976.2,524.6 C978.1,524.6 979.9,501.3 981.8,501.3 C982.3,501.3 982.9,502.9 983.4,502.9 C986.1,502.9 988.8,487.1 991.5,487.1 C993.4,487.1 995.2,487.5 997.1,489.2 C998.4,490.4 999.8,493.6 1001.1,494.8 C1004.9,498.3 1008.6,499.4 1012.4,499.7 C1016.1,500.0 1019.9,499.7 1023.6,500.5 C1025.2,500.8 1026.9,506.9 1028.5,506.9 C1029.6,506.9 1030.6,501.3 1031.7,501.3 C1033.3,501.3 1034.9,519.0 1036.5,522.2 C1038.1,525.4 1039.7,525.4 1041.3,525.4 C1043.4,525.4 1045.6,515.7 1047.7,515.7 C1049.6,515.7 1051.5,526.2 1053.4,526.2 C1056.6,526.2 1059.8,505.8 1063.0,505.8 C1064.9,505.8 1066.7,523.7 1068.6,532.6" stroke="#1c1f1c" stroke-opacity="0.55" stroke-width="4.2" fill="none" stroke-linejoin="round" stroke-linecap="round"/>
<path d="M51.1,345.4 C75.5,345.5 100.0,345.4 124.4,346.4 C129.8,346.6 135.1,346.9 140.5,350.5 C147.2,355.0 153.9,365.0 160.6,372.6 C166.6,379.4 172.6,384.5 178.6,393.7 C186.0,404.9 193.3,424.9 200.7,435.2 C205.4,441.8 210.1,444.1 214.8,448.2 C220.2,452.9 225.5,461.3 230.9,461.3 C236.3,461.3 241.6,458.4 247.0,458.3 C252.3,458.2 257.7,458.3 263.0,457.9 C268.4,457.5 273.7,453.3 279.1,448.2 C283.8,443.8 288.5,436.3 293.2,430.1 C300.6,420.4 307.9,410.3 315.3,400.0 C318.0,396.3 320.6,388.6 323.3,388.6 C325.6,388.6 328.0,390.6 330.3,390.6 C336.9,390.6 343.5,375.6 350.1,370.6 C353.4,368.1 356.8,366.8 360.1,365.5 C369.5,361.9 378.9,358.1 388.3,358.1 C393.6,358.1 399.0,358.1 404.3,358.5 C411.0,359.0 417.7,361.5 424.4,361.5 C430.4,361.5 436.5,361.1 442.5,361.1 C450.5,361.1 458.6,366.5 466.6,366.5 C469.3,366.5 472.0,365.5 474.7,365.5 C479.4,365.5 484.0,369.2 488.7,370.2 C499.4,372.6 510.2,372.5 520.9,373.6 C527.6,374.3 534.3,375.1 541.0,375.6 C552.4,376.4 563.7,377.0 575.1,377.0 C580.5,377.0 585.8,376.4 591.2,375.6 C599.2,374.4 607.3,372.1 615.3,370.6 C624.9,368.9 634.5,367.6 644.1,366.1 C653.2,364.7 662.3,362.1 671.4,362.1 C676.8,362.1 682.1,362.1 687.5,362.9 C691.8,363.5 696.1,365.3 700.4,369.3 C703.6,372.2 706.8,375.3 710.0,382.2 C712.2,386.9 714.3,394.6 716.5,401.4 C718.4,407.2 720.2,419.9 722.1,419.9 C725.6,419.9 729.0,405.1 732.5,398.2 C735.2,392.8 737.9,386.8 740.6,383.0 C743.8,378.5 747.0,374.1 750.2,374.1 C752.4,374.1 754.5,383.8 756.7,383.8 C758.6,383.8 760.4,377.0 762.3,377.0 C765.2,377.0 768.2,377.0 771.1,378.9 C771.9,379.4 772.7,392.2 773.5,392.6 C776.5,394.2 779.4,394.2 782.4,394.2 C785.1,394.2 787.7,376.3 790.4,373.3 C792.5,370.9 794.7,370.9 796.8,370.9 C797.6,370.9 798.5,377.3 799.3,377.3 C802.0,377.3 804.6,367.4 807.3,367.4 C808.9,367.4 810.5,383.8 812.1,383.8 C814.3,383.8 816.4,383.8 818.6,382.2 C821.0,380.4 823.4,368.5 825.8,368.5 C827.1,368.5 828.5,376.5 829.8,376.5 C832.7,376.5 835.7,366.9 838.6,366.9 C840.0,366.9 841.3,366.9 842.7,367.7 C844.3,368.6 845.9,382.2 847.5,382.2 C848.8,382.2 850.2,374.1 851.5,374.1 C853.1,374.1 854.8,374.1 856.4,380.4 C859.6,392.9 862.9,432.4 866.1,444.7 C867.4,449.8 868.8,447.0 870.1,451.4 C872.0,457.5 873.8,482.0 875.7,482.0 C877.6,482.0 879.5,456.6 881.4,445.0 C883.0,435.2 884.6,417.3 886.2,417.3 C887.8,417.3 889.4,417.3 891.0,422.2 C892.6,427.1 894.2,491.6 895.8,491.6 C896.6,491.6 897.4,483.6 898.2,483.6 C900.1,483.6 902.0,485.7 903.9,493.2 C905.8,500.5 907.6,527.8 909.5,527.8 C911.6,527.8 913.8,449.0 915.9,449.0 C917.1,449.0 918.3,498.1 919.5,498.1 C921.0,498.1 922.5,433.0 924.0,427.0 C925.6,420.6 927.2,420.6 928.8,420.6 C929.6,420.6 930.4,430.2 931.2,430.2 C932.5,430.2 933.9,418.5 935.2,416.5 C937.3,413.3 939.5,413.3 941.6,413.3 C943.5,413.3 945.4,413.3 947.3,417.3 C948.1,419.0 948.9,432.6 949.7,432.6 C950.8,432.6 951.8,424.6 952.9,424.6 C955.6,424.6 958.2,436.5 960.9,441.5 C962.5,444.6 964.2,444.0 965.8,449.5 C967.4,454.9 969.0,462.6 970.6,473.9 C972.5,487.1 974.3,524.6 976.2,524.6 C978.1,524.6 979.9,501.3 981.8,501.3 C982.3,501.3 982.9,502.9 983.4,502.9 C986.1,502.9 988.8,487.1 991.5,487.1 C993.4,487.1 995.2,487.5 997.1,489.2 C998.4,490.4 999.8,493.6 1001.1,494.8 C1004.9,498.3 1008.6,499.4 1012.4,499.7 C1016.1,500.0 1019.9,499.7 1023.6,500.5 C1025.2,500.8 1026.9,506.9 1028.5,506.9 C1029.6,506.9 1030.6,501.3 1031.7,501.3 C1033.3,501.3 1034.9,519.0 1036.5,522.2 C1038.1,525.4 1039.7,525.4 1041.3,525.4 C1043.4,525.4 1045.6,515.7 1047.7,515.7 C1049.6,515.7 1051.5,526.2 1053.4,526.2 C1056.6,526.2 1059.8,505.8 1063.0,505.8 C1064.9,505.8 1066.7,523.7 1068.6,532.6" stroke="#00ff00" stroke-width="2.6" fill="none" stroke-linejoin="round" stroke-linecap="round"/></g>
<g clip-path="url(#cpb)"><path d="M51.1,345.4 C75.5,345.5 100.0,345.4 124.4,346.4 C129.8,346.6 135.1,346.9 140.5,350.5 C147.2,355.0 153.9,365.0 160.6,372.6 C166.6,379.4 172.6,384.5 178.6,393.7 C186.0,404.9 193.3,424.9 200.7,435.2 C205.4,441.8 210.1,444.1 214.8,448.2 C220.2,452.9 225.5,461.3 230.9,461.3 C236.3,461.3 241.6,458.4 247.0,458.3 C252.3,458.2 257.7,458.3 263.0,457.9 C268.4,457.5 273.7,453.3 279.1,448.2 C283.8,443.8 288.5,436.3 293.2,430.1 C300.6,420.4 307.9,410.3 315.3,400.0 C318.0,396.3 320.6,388.6 323.3,388.6 C325.6,388.6 328.0,390.6 330.3,390.6 C336.9,390.6 343.5,375.6 350.1,370.6 C353.4,368.1 356.8,366.8 360.1,365.5 C369.5,361.9 378.9,358.1 388.3,358.1 C393.6,358.1 399.0,358.1 404.3,358.5 C411.0,359.0 417.7,361.5 424.4,361.5 C430.4,361.5 436.5,361.1 442.5,361.1 C450.5,361.1 458.6,366.5 466.6,366.5 C469.3,366.5 472.0,365.5 474.7,365.5 C479.4,365.5 484.0,369.2 488.7,370.2 C499.4,372.6 510.2,372.5 520.9,373.6 C527.6,374.3 534.3,375.1 541.0,375.6 C552.4,376.4 563.7,377.0 575.1,377.0 C580.5,377.0 585.8,376.4 591.2,375.6 C599.2,374.4 607.3,372.1 615.3,370.6 C624.9,368.9 634.5,367.6 644.1,366.1 C653.2,364.7 662.3,362.1 671.4,362.1 C676.8,362.1 682.1,362.1 687.5,362.9 C691.8,363.5 696.1,365.3 700.4,369.3 C703.6,372.2 706.8,375.3 710.0,382.2 C712.2,386.9 714.3,394.6 716.5,401.4 C718.4,407.2 720.2,419.9 722.1,419.9 C725.6,419.9 729.0,405.1 732.5,398.2 C735.2,392.8 737.9,386.8 740.6,383.0 C743.8,378.5 747.0,374.1 750.2,374.1 C752.4,374.1 754.5,383.8 756.7,383.8 C758.6,383.8 760.4,377.0 762.3,377.0 C765.2,377.0 768.2,377.0 771.1,378.9 C771.9,379.4 772.7,392.2 773.5,392.6 C776.5,394.2 779.4,394.2 782.4,394.2 C785.1,394.2 787.7,376.3 790.4,373.3 C792.5,370.9 794.7,370.9 796.8,370.9 C797.6,370.9 798.5,377.3 799.3,377.3 C802.0,377.3 804.6,367.4 807.3,367.4 C808.9,367.4 810.5,383.8 812.1,383.8 C814.3,383.8 816.4,383.8 818.6,382.2 C821.0,380.4 823.4,368.5 825.8,368.5 C827.1,368.5 828.5,376.5 829.8,376.5 C832.7,376.5 835.7,366.9 838.6,366.9 C840.0,366.9 841.3,366.9 842.7,367.7 C844.3,368.6 845.9,382.2 847.5,382.2 C848.8,382.2 850.2,374.1 851.5,374.1 C853.1,374.1 854.8,374.1 856.4,380.4 C859.6,392.9 862.9,432.4 866.1,444.7 C867.4,449.8 868.8,447.0 870.1,451.4 C872.0,457.5 873.8,482.0 875.7,482.0 C877.6,482.0 879.5,456.6 881.4,445.0 C883.0,435.2 884.6,417.3 886.2,417.3 C887.8,417.3 889.4,417.3 891.0,422.2 C892.6,427.1 894.2,491.6 895.8,491.6 C896.6,491.6 897.4,483.6 898.2,483.6 C900.1,483.6 902.0,485.7 903.9,493.2 C905.8,500.5 907.6,527.8 909.5,527.8 C911.6,527.8 913.8,449.0 915.9,449.0 C917.1,449.0 918.3,498.1 919.5,498.1 C921.0,498.1 922.5,433.0 924.0,427.0 C925.6,420.6 927.2,420.6 928.8,420.6 C929.6,420.6 930.4,430.2 931.2,430.2 C932.5,430.2 933.9,418.5 935.2,416.5 C937.3,413.3 939.5,413.3 941.6,413.3 C943.5,413.3 945.4,413.3 947.3,417.3 C948.1,419.0 948.9,432.6 949.7,432.6 C950.8,432.6 951.8,424.6 952.9,424.6 C955.6,424.6 958.2,436.5 960.9,441.5 C962.5,444.6 964.2,444.0 965.8,449.5 C967.4,454.9 969.0,462.6 970.6,473.9 C972.5,487.1 974.3,524.6 976.2,524.6 C978.1,524.6 979.9,501.3 981.8,501.3 C982.3,501.3 982.9,502.9 983.4,502.9 C986.1,502.9 988.8,487.1 991.5,487.1 C993.4,487.1 995.2,487.5 997.1,489.2 C998.4,490.4 999.8,493.6 1001.1,494.8 C1004.9,498.3 1008.6,499.4 1012.4,499.7 C1016.1,500.0 1019.9,499.7 1023.6,500.5 C1025.2,500.8 1026.9,506.9 1028.5,506.9 C1029.6,506.9 1030.6,501.3 1031.7,501.3 C1033.3,501.3 1034.9,519.0 1036.5,522.2 C1038.1,525.4 1039.7,525.4 1041.3,525.4 C1043.4,525.4 1045.6,515.7 1047.7,515.7 C1049.6,515.7 1051.5,526.2 1053.4,526.2 C1056.6,526.2 1059.8,505.8 1063.0,505.8 C1064.9,505.8 1066.7,523.7 1068.6,532.6" stroke="#00ff00" stroke-width="2.1" stroke-dasharray="1.6,0.7" fill="none"/></g>
<g clip-path="url(#cpa)"><path d="M51.1,290.6 C80.9,290.6 110.7,290.6 140.5,291.2 C148.5,291.4 156.6,294.6 164.6,297.2 C171.3,299.4 178.0,301.1 184.7,305.3 C190.7,309.1 196.7,318.1 202.7,320.7 C210.1,323.9 217.5,323.9 224.9,323.9 C230.9,323.9 236.9,316.5 242.9,315.3 C248.3,314.2 253.6,314.7 259.0,313.9 C266.4,312.7 273.7,308.7 281.1,306.3 C287.8,304.1 294.5,301.4 301.2,300.2 C308.6,298.8 315.9,298.8 323.3,298.8 C325.6,298.8 328.0,303.2 330.3,303.2 C335.6,303.2 340.8,298.8 346.1,297.6 C352.8,296.0 359.5,295.4 366.2,295.4 C374.2,295.4 382.3,295.4 390.3,295.4 C400.3,295.4 410.4,297.5 420.4,298.2 C427.8,298.7 435.1,298.5 442.5,299.2 C450.5,299.9 458.6,302.6 466.6,302.6 C469.3,302.6 472.0,301.2 474.7,301.2 C480.0,301.2 485.4,303.5 490.7,304.2 C507.5,306.3 524.2,307.3 541.0,307.3 C552.4,307.3 563.7,306.0 575.1,305.3 C588.5,304.5 601.9,303.7 615.3,302.6 C620.2,302.2 625.1,301.7 630.0,301.2 C642.7,300.0 655.5,297.7 668.2,297.7 C678.9,297.7 689.7,297.7 700.4,298.5 C703.6,298.7 706.8,300.4 710.0,303.3 C713.5,306.5 717.0,317.0 720.5,317.0 C723.4,317.0 726.4,308.2 729.3,305.7 C735.7,300.2 742.2,297.7 748.6,297.7 C751.3,297.7 754.0,305.7 756.7,305.7 C758.3,305.7 759.9,303.3 761.5,303.3 C764.7,303.3 767.9,303.3 771.1,305.7 C772.7,306.9 774.3,317.0 775.9,317.0 C778.1,317.0 780.2,317.0 782.4,315.4 C785.1,313.4 787.7,300.1 790.4,300.1 C792.5,300.1 794.7,300.1 796.8,300.1 C797.6,300.1 798.5,305.7 799.3,305.7 C802.0,305.7 804.6,297.7 807.3,297.7 C808.9,297.7 810.5,309.8 812.1,309.8 C814.3,309.8 816.4,309.8 818.6,309.0 C821.0,308.1 823.4,299.3 825.8,299.3 C827.4,299.3 829.0,305.7 830.6,305.7 C832.7,305.7 834.9,299.3 837.0,299.3 C838.6,299.3 840.3,299.3 841.9,300.1 C844.0,301.1 846.2,313.0 848.3,313.0 C849.4,313.0 850.4,306.5 851.5,306.5 C853.1,306.5 854.8,309.7 856.4,315.0 C859.6,325.5 862.9,346.4 866.1,361.0 C869.0,374.3 872.0,398.9 874.9,398.9 C878.4,398.9 881.9,338.3 885.4,338.3 C888.9,338.3 892.3,419.8 895.8,419.8 C896.6,419.8 897.4,410.1 898.2,410.1 C899.8,410.1 901.5,410.1 903.1,414.1 C905.0,418.7 906.8,447.1 908.7,447.1 C911.1,447.1 913.5,362.0 915.9,362.0 C917.0,362.0 918.0,409.3 919.1,409.3 C920.2,409.3 921.2,341.1 922.3,337.5 C924.2,331.1 926.1,331.1 928.0,331.1 C928.8,331.1 929.6,335.9 930.4,335.9 C932.0,335.9 933.6,325.8 935.2,323.1 C937.9,318.6 940.5,317.4 943.2,317.4 C944.8,317.4 946.5,322.0 948.1,323.1 C949.4,324.0 950.8,323.4 952.1,324.7 C955.3,327.9 958.5,334.2 961.7,342.4 C963.6,347.3 965.5,347.8 967.4,361.0 C970.1,379.6 972.7,446.3 975.4,446.3 C977.0,446.3 978.6,394.8 980.2,394.8 C981.3,394.8 982.3,394.8 983.4,394.8 C986.1,394.8 988.8,364.3 991.5,364.3 C993.6,364.3 995.8,366.2 997.9,369.1 C998.7,370.2 999.5,372.9 1000.3,373.9 C1004.3,378.8 1008.4,378.8 1012.4,378.8 C1014.5,378.8 1016.7,375.5 1018.8,375.5 C1021.5,375.5 1024.1,387.6 1026.8,387.6 C1028.2,387.6 1029.5,381.2 1030.9,381.2 C1032.1,381.2 1033.2,403.4 1034.4,414.5" stroke="#1c1f1c" stroke-opacity="0.55" stroke-width="4.2" fill="none" stroke-linejoin="round" stroke-linecap="round"/>
<path d="M51.1,290.6 C80.9,290.6 110.7,290.6 140.5,291.2 C148.5,291.4 156.6,294.6 164.6,297.2 C171.3,299.4 178.0,301.1 184.7,305.3 C190.7,309.1 196.7,318.1 202.7,320.7 C210.1,323.9 217.5,323.9 224.9,323.9 C230.9,323.9 236.9,316.5 242.9,315.3 C248.3,314.2 253.6,314.7 259.0,313.9 C266.4,312.7 273.7,308.7 281.1,306.3 C287.8,304.1 294.5,301.4 301.2,300.2 C308.6,298.8 315.9,298.8 323.3,298.8 C325.6,298.8 328.0,303.2 330.3,303.2 C335.6,303.2 340.8,298.8 346.1,297.6 C352.8,296.0 359.5,295.4 366.2,295.4 C374.2,295.4 382.3,295.4 390.3,295.4 C400.3,295.4 410.4,297.5 420.4,298.2 C427.8,298.7 435.1,298.5 442.5,299.2 C450.5,299.9 458.6,302.6 466.6,302.6 C469.3,302.6 472.0,301.2 474.7,301.2 C480.0,301.2 485.4,303.5 490.7,304.2 C507.5,306.3 524.2,307.3 541.0,307.3 C552.4,307.3 563.7,306.0 575.1,305.3 C588.5,304.5 601.9,303.7 615.3,302.6 C620.2,302.2 625.1,301.7 630.0,301.2 C642.7,300.0 655.5,297.7 668.2,297.7 C678.9,297.7 689.7,297.7 700.4,298.5 C703.6,298.7 706.8,300.4 710.0,303.3 C713.5,306.5 717.0,317.0 720.5,317.0 C723.4,317.0 726.4,308.2 729.3,305.7 C735.7,300.2 742.2,297.7 748.6,297.7 C751.3,297.7 754.0,305.7 756.7,305.7 C758.3,305.7 759.9,303.3 761.5,303.3 C764.7,303.3 767.9,303.3 771.1,305.7 C772.7,306.9 774.3,317.0 775.9,317.0 C778.1,317.0 780.2,317.0 782.4,315.4 C785.1,313.4 787.7,300.1 790.4,300.1 C792.5,300.1 794.7,300.1 796.8,300.1 C797.6,300.1 798.5,305.7 799.3,305.7 C802.0,305.7 804.6,297.7 807.3,297.7 C808.9,297.7 810.5,309.8 812.1,309.8 C814.3,309.8 816.4,309.8 818.6,309.0 C821.0,308.1 823.4,299.3 825.8,299.3 C827.4,299.3 829.0,305.7 830.6,305.7 C832.7,305.7 834.9,299.3 837.0,299.3 C838.6,299.3 840.3,299.3 841.9,300.1 C844.0,301.1 846.2,313.0 848.3,313.0 C849.4,313.0 850.4,306.5 851.5,306.5 C853.1,306.5 854.8,309.7 856.4,315.0 C859.6,325.5 862.9,346.4 866.1,361.0 C869.0,374.3 872.0,398.9 874.9,398.9 C878.4,398.9 881.9,338.3 885.4,338.3 C888.9,338.3 892.3,419.8 895.8,419.8 C896.6,419.8 897.4,410.1 898.2,410.1 C899.8,410.1 901.5,410.1 903.1,414.1 C905.0,418.7 906.8,447.1 908.7,447.1 C911.1,447.1 913.5,362.0 915.9,362.0 C917.0,362.0 918.0,409.3 919.1,409.3 C920.2,409.3 921.2,341.1 922.3,337.5 C924.2,331.1 926.1,331.1 928.0,331.1 C928.8,331.1 929.6,335.9 930.4,335.9 C932.0,335.9 933.6,325.8 935.2,323.1 C937.9,318.6 940.5,317.4 943.2,317.4 C944.8,317.4 946.5,322.0 948.1,323.1 C949.4,324.0 950.8,323.4 952.1,324.7 C955.3,327.9 958.5,334.2 961.7,342.4 C963.6,347.3 965.5,347.8 967.4,361.0 C970.1,379.6 972.7,446.3 975.4,446.3 C977.0,446.3 978.6,394.8 980.2,394.8 C981.3,394.8 982.3,394.8 983.4,394.8 C986.1,394.8 988.8,364.3 991.5,364.3 C993.6,364.3 995.8,366.2 997.9,369.1 C998.7,370.2 999.5,372.9 1000.3,373.9 C1004.3,378.8 1008.4,378.8 1012.4,378.8 C1014.5,378.8 1016.7,375.5 1018.8,375.5 C1021.5,375.5 1024.1,387.6 1026.8,387.6 C1028.2,387.6 1029.5,381.2 1030.9,381.2 C1032.1,381.2 1033.2,403.4 1034.4,414.5" stroke="#ddff00" stroke-width="2.6" fill="none" stroke-linejoin="round" stroke-linecap="round"/></g>
<g clip-path="url(#cpb)"><path d="M51.1,290.6 C80.9,290.6 110.7,290.6 140.5,291.2 C148.5,291.4 156.6,294.6 164.6,297.2 C171.3,299.4 178.0,301.1 184.7,305.3 C190.7,309.1 196.7,318.1 202.7,320.7 C210.1,323.9 217.5,323.9 224.9,323.9 C230.9,323.9 236.9,316.5 242.9,315.3 C248.3,314.2 253.6,314.7 259.0,313.9 C266.4,312.7 273.7,308.7 281.1,306.3 C287.8,304.1 294.5,301.4 301.2,300.2 C308.6,298.8 315.9,298.8 323.3,298.8 C325.6,298.8 328.0,303.2 330.3,303.2 C335.6,303.2 340.8,298.8 346.1,297.6 C352.8,296.0 359.5,295.4 366.2,295.4 C374.2,295.4 382.3,295.4 390.3,295.4 C400.3,295.4 410.4,297.5 420.4,298.2 C427.8,298.7 435.1,298.5 442.5,299.2 C450.5,299.9 458.6,302.6 466.6,302.6 C469.3,302.6 472.0,301.2 474.7,301.2 C480.0,301.2 485.4,303.5 490.7,304.2 C507.5,306.3 524.2,307.3 541.0,307.3 C552.4,307.3 563.7,306.0 575.1,305.3 C588.5,304.5 601.9,303.7 615.3,302.6 C620.2,302.2 625.1,301.7 630.0,301.2 C642.7,300.0 655.5,297.7 668.2,297.7 C678.9,297.7 689.7,297.7 700.4,298.5 C703.6,298.7 706.8,300.4 710.0,303.3 C713.5,306.5 717.0,317.0 720.5,317.0 C723.4,317.0 726.4,308.2 729.3,305.7 C735.7,300.2 742.2,297.7 748.6,297.7 C751.3,297.7 754.0,305.7 756.7,305.7 C758.3,305.7 759.9,303.3 761.5,303.3 C764.7,303.3 767.9,303.3 771.1,305.7 C772.7,306.9 774.3,317.0 775.9,317.0 C778.1,317.0 780.2,317.0 782.4,315.4 C785.1,313.4 787.7,300.1 790.4,300.1 C792.5,300.1 794.7,300.1 796.8,300.1 C797.6,300.1 798.5,305.7 799.3,305.7 C802.0,305.7 804.6,297.7 807.3,297.7 C808.9,297.7 810.5,309.8 812.1,309.8 C814.3,309.8 816.4,309.8 818.6,309.0 C821.0,308.1 823.4,299.3 825.8,299.3 C827.4,299.3 829.0,305.7 830.6,305.7 C832.7,305.7 834.9,299.3 837.0,299.3 C838.6,299.3 840.3,299.3 841.9,300.1 C844.0,301.1 846.2,313.0 848.3,313.0 C849.4,313.0 850.4,306.5 851.5,306.5 C853.1,306.5 854.8,309.7 856.4,315.0 C859.6,325.5 862.9,346.4 866.1,361.0 C869.0,374.3 872.0,398.9 874.9,398.9 C878.4,398.9 881.9,338.3 885.4,338.3 C888.9,338.3 892.3,419.8 895.8,419.8 C896.6,419.8 897.4,410.1 898.2,410.1 C899.8,410.1 901.5,410.1 903.1,414.1 C905.0,418.7 906.8,447.1 908.7,447.1 C911.1,447.1 913.5,362.0 915.9,362.0 C917.0,362.0 918.0,409.3 919.1,409.3 C920.2,409.3 921.2,341.1 922.3,337.5 C924.2,331.1 926.1,331.1 928.0,331.1 C928.8,331.1 929.6,335.9 930.4,335.9 C932.0,335.9 933.6,325.8 935.2,323.1 C937.9,318.6 940.5,317.4 943.2,317.4 C944.8,317.4 946.5,322.0 948.1,323.1 C949.4,324.0 950.8,323.4 952.1,324.7 C955.3,327.9 958.5,334.2 961.7,342.4 C963.6,347.3 965.5,347.8 967.4,361.0 C970.1,379.6 972.7,446.3 975.4,446.3 C977.0,446.3 978.6,394.8 980.2,394.8 C981.3,394.8 982.3,394.8 983.4,394.8 C986.1,394.8 988.8,364.3 991.5,364.3 C993.6,364.3 995.8,366.2 997.9,369.1 C998.7,370.2 999.5,372.9 1000.3,373.9 C1004.3,378.8 1008.4,378.8 1012.4,378.8 C1014.5,378.8 1016.7,375.5 1018.8,375.5 C1021.5,375.5 1024.1,387.6 1026.8,387.6 C1028.2,387.6 1029.5,381.2 1030.9,381.2 C1032.1,381.2 1033.2,403.4 1034.4,414.5" stroke="#ddff00" stroke-width="2.1" stroke-dasharray="1.6,0.7" fill="none"/></g>
<g clip-path="url(#cpa)"><path d="M51.1,259.0 C76.9,259.0 102.6,259.0 128.4,259.0 C132.4,259.0 136.5,259.0 140.5,261.1 C144.5,263.2 148.5,267.9 152.5,272.1 C160.5,280.5 168.6,289.5 176.6,300.2 C184.6,310.9 192.7,326.3 200.7,336.4 C205.4,342.3 210.1,346.5 214.8,350.5 C220.2,355.0 225.5,361.5 230.9,361.5 C236.9,361.5 243.0,360.1 249.0,360.1 C253.7,360.1 258.3,360.9 263.0,360.9 C267.7,360.9 272.4,357.9 277.1,354.5 C281.8,351.1 286.5,345.5 291.2,340.4 C295.9,335.4 300.5,329.2 305.2,324.3 C311.2,318.0 317.3,307.3 323.3,307.3 C325.6,307.3 328.0,308.3 330.3,308.3 C336.9,308.3 343.5,296.0 350.1,291.2 C353.4,288.8 356.8,286.7 360.1,285.2 C369.5,281.0 378.9,277.1 388.3,277.1 C393.6,277.1 399.0,277.3 404.3,277.7 C411.0,278.2 417.7,280.1 424.4,280.1 C430.4,280.1 436.5,279.1 442.5,279.1 C450.5,279.1 458.6,284.2 466.6,284.2 C469.3,284.2 472.0,281.7 474.7,281.7 C479.4,281.7 484.0,285.3 488.7,286.2 C499.4,288.3 510.2,287.7 520.9,288.6 C527.6,289.2 534.3,290.2 541.0,290.6 C552.4,291.3 563.7,291.6 575.1,291.6 C580.5,291.6 585.8,291.1 591.2,290.2 C599.2,288.9 607.3,286.0 615.3,284.2 C620.2,283.1 625.1,281.9 630.0,281.1 C634.7,280.3 639.4,279.9 644.1,279.2 C653.2,277.8 662.3,275.2 671.4,274.4 C676.8,273.9 682.1,273.9 687.5,273.9 C691.8,273.9 696.1,276.1 700.4,280.0 C703.6,282.9 706.8,286.4 710.0,292.9 C712.2,297.3 714.3,304.5 716.5,310.6 C718.4,315.9 720.2,327.0 722.1,327.0 C725.6,327.0 729.0,315.6 732.5,310.6 C735.2,306.7 737.9,303.1 740.6,300.1 C744.1,296.3 747.5,290.5 751.0,290.5 C752.9,290.5 754.8,298.5 756.7,298.5 C758.3,298.5 759.9,291.7 761.5,291.3 C764.7,290.5 767.9,290.5 771.1,290.5 C772.2,290.5 773.2,303.6 774.3,304.1 C777.5,305.7 780.8,305.7 784.0,305.7 C786.1,305.7 788.3,290.6 790.4,287.3 C792.5,284.0 794.7,284.0 796.8,284.0 C797.6,284.0 798.5,289.7 799.3,289.7 C802.0,289.7 804.6,280.0 807.3,280.0 C808.9,280.0 810.5,294.5 812.1,294.5 C814.3,294.5 816.4,294.5 818.6,292.9 C821.0,291.1 823.4,281.6 825.8,281.6 C827.1,281.6 828.5,290.5 829.8,290.5 C831.7,290.5 833.5,283.2 835.4,283.2 C837.6,283.2 839.7,283.2 841.9,284.0 C843.8,284.7 845.6,296.9 847.5,296.9 C848.8,296.9 850.2,290.5 851.5,290.5 C853.1,290.5 854.8,290.5 856.4,294.1 C858.6,298.9 860.7,309.5 862.9,321.5 C864.5,330.4 866.1,346.2 867.7,354.6 C870.4,368.6 873.0,383.6 875.7,383.6 C879.5,383.6 883.2,327.9 887.0,327.9 C888.6,327.9 890.2,327.9 891.8,331.1 C893.1,333.8 894.5,386.8 895.8,386.8 C896.6,386.8 897.4,382.8 898.2,382.8 C899.8,382.8 901.5,386.1 903.1,391.6 C905.2,398.7 907.4,423.0 909.5,423.0 C911.6,423.0 913.8,359.5 915.9,359.5 C917.2,359.5 918.6,400.5 919.9,400.5 C921.3,400.5 922.6,340.8 924.0,337.5 C925.3,334.3 926.7,334.3 928.0,334.3 C929.1,334.3 930.1,342.4 931.2,342.4 C932.5,342.4 933.9,330.6 935.2,327.9 C937.6,323.1 940.0,323.1 942.4,323.1 C944.0,323.1 945.7,323.3 947.3,327.9 C948.1,330.2 948.9,339.2 949.7,339.2 C950.5,339.2 951.3,331.1 952.1,331.1 C955.0,331.1 958.0,338.2 960.9,344.0 C963.6,349.4 966.3,351.0 969.0,364.3 C971.4,376.1 973.8,417.3 976.2,417.3 C978.1,417.3 979.9,399.7 981.8,399.7 C982.9,399.7 983.9,400.5 985.0,400.5 C987.7,400.5 990.4,387.1 993.1,387.1 C994.7,387.1 996.3,387.7 997.9,389.2 C999.0,390.2 1000.0,393.0 1001.1,394.0 C1004.9,397.6 1008.6,398.5 1012.4,398.9 C1015.9,399.3 1019.3,399.0 1022.8,399.7 C1024.7,400.1 1026.6,404.5 1028.5,404.5 C1029.6,404.5 1030.6,399.7 1031.7,399.7 C1033.3,399.7 1034.9,412.3 1036.5,415.7 C1038.1,419.1 1039.7,419.8 1041.3,419.8 C1043.4,419.8 1045.6,412.5 1047.7,412.5 C1049.6,412.5 1051.5,420.6 1053.4,420.6 C1056.6,420.6 1059.8,402.9 1063.0,402.9 C1065.2,402.9 1067.3,419.5 1069.5,427.8" stroke="#1c1f1c" stroke-opacity="0.55" stroke-width="4.2" fill="none" stroke-linejoin="round" stroke-linecap="round"/>
<path d="M51.1,259.0 C76.9,259.0 102.6,259.0 128.4,259.0 C132.4,259.0 136.5,259.0 140.5,261.1 C144.5,263.2 148.5,267.9 152.5,272.1 C160.5,280.5 168.6,289.5 176.6,300.2 C184.6,310.9 192.7,326.3 200.7,336.4 C205.4,342.3 210.1,346.5 214.8,350.5 C220.2,355.0 225.5,361.5 230.9,361.5 C236.9,361.5 243.0,360.1 249.0,360.1 C253.7,360.1 258.3,360.9 263.0,360.9 C267.7,360.9 272.4,357.9 277.1,354.5 C281.8,351.1 286.5,345.5 291.2,340.4 C295.9,335.4 300.5,329.2 305.2,324.3 C311.2,318.0 317.3,307.3 323.3,307.3 C325.6,307.3 328.0,308.3 330.3,308.3 C336.9,308.3 343.5,296.0 350.1,291.2 C353.4,288.8 356.8,286.7 360.1,285.2 C369.5,281.0 378.9,277.1 388.3,277.1 C393.6,277.1 399.0,277.3 404.3,277.7 C411.0,278.2 417.7,280.1 424.4,280.1 C430.4,280.1 436.5,279.1 442.5,279.1 C450.5,279.1 458.6,284.2 466.6,284.2 C469.3,284.2 472.0,281.7 474.7,281.7 C479.4,281.7 484.0,285.3 488.7,286.2 C499.4,288.3 510.2,287.7 520.9,288.6 C527.6,289.2 534.3,290.2 541.0,290.6 C552.4,291.3 563.7,291.6 575.1,291.6 C580.5,291.6 585.8,291.1 591.2,290.2 C599.2,288.9 607.3,286.0 615.3,284.2 C620.2,283.1 625.1,281.9 630.0,281.1 C634.7,280.3 639.4,279.9 644.1,279.2 C653.2,277.8 662.3,275.2 671.4,274.4 C676.8,273.9 682.1,273.9 687.5,273.9 C691.8,273.9 696.1,276.1 700.4,280.0 C703.6,282.9 706.8,286.4 710.0,292.9 C712.2,297.3 714.3,304.5 716.5,310.6 C718.4,315.9 720.2,327.0 722.1,327.0 C725.6,327.0 729.0,315.6 732.5,310.6 C735.2,306.7 737.9,303.1 740.6,300.1 C744.1,296.3 747.5,290.5 751.0,290.5 C752.9,290.5 754.8,298.5 756.7,298.5 C758.3,298.5 759.9,291.7 761.5,291.3 C764.7,290.5 767.9,290.5 771.1,290.5 C772.2,290.5 773.2,303.6 774.3,304.1 C777.5,305.7 780.8,305.7 784.0,305.7 C786.1,305.7 788.3,290.6 790.4,287.3 C792.5,284.0 794.7,284.0 796.8,284.0 C797.6,284.0 798.5,289.7 799.3,289.7 C802.0,289.7 804.6,280.0 807.3,280.0 C808.9,280.0 810.5,294.5 812.1,294.5 C814.3,294.5 816.4,294.5 818.6,292.9 C821.0,291.1 823.4,281.6 825.8,281.6 C827.1,281.6 828.5,290.5 829.8,290.5 C831.7,290.5 833.5,283.2 835.4,283.2 C837.6,283.2 839.7,283.2 841.9,284.0 C843.8,284.7 845.6,296.9 847.5,296.9 C848.8,296.9 850.2,290.5 851.5,290.5 C853.1,290.5 854.8,290.5 856.4,294.1 C858.6,298.9 860.7,309.5 862.9,321.5 C864.5,330.4 866.1,346.2 867.7,354.6 C870.4,368.6 873.0,383.6 875.7,383.6 C879.5,383.6 883.2,327.9 887.0,327.9 C888.6,327.9 890.2,327.9 891.8,331.1 C893.1,333.8 894.5,386.8 895.8,386.8 C896.6,386.8 897.4,382.8 898.2,382.8 C899.8,382.8 901.5,386.1 903.1,391.6 C905.2,398.7 907.4,423.0 909.5,423.0 C911.6,423.0 913.8,359.5 915.9,359.5 C917.2,359.5 918.6,400.5 919.9,400.5 C921.3,400.5 922.6,340.8 924.0,337.5 C925.3,334.3 926.7,334.3 928.0,334.3 C929.1,334.3 930.1,342.4 931.2,342.4 C932.5,342.4 933.9,330.6 935.2,327.9 C937.6,323.1 940.0,323.1 942.4,323.1 C944.0,323.1 945.7,323.3 947.3,327.9 C948.1,330.2 948.9,339.2 949.7,339.2 C950.5,339.2 951.3,331.1 952.1,331.1 C955.0,331.1 958.0,338.2 960.9,344.0 C963.6,349.4 966.3,351.0 969.0,364.3 C971.4,376.1 973.8,417.3 976.2,417.3 C978.1,417.3 979.9,399.7 981.8,399.7 C982.9,399.7 983.9,400.5 985.0,400.5 C987.7,400.5 990.4,387.1 993.1,387.1 C994.7,387.1 996.3,387.7 997.9,389.2 C999.0,390.2 1000.0,393.0 1001.1,394.0 C1004.9,397.6 1008.6,398.5 1012.4,398.9 C1015.9,399.3 1019.3,399.0 1022.8,399.7 C1024.7,400.1 1026.6,404.5 1028.5,404.5 C1029.6,404.5 1030.6,399.7 1031.7,399.7 C1033.3,399.7 1034.9,412.3 1036.5,415.7 C1038.1,419.1 1039.7,419.8 1041.3,419.8 C1043.4,419.8 1045.6,412.5 1047.7,412.5 C1049.6,412.5 1051.5,420.6 1053.4,420.6 C1056.6,420.6 1059.8,402.9 1063.0,402.9 C1065.2,402.9 1067.3,419.5 1069.5,427.8" stroke="#ff6a00" stroke-width="2.6" fill="none" stroke-linejoin="round" stroke-linecap="round"/></g>
<g clip-path="url(#cpb)"><path d="M51.1,259.0 C76.9,259.0 102.6,259.0 128.4,259.0 C132.4,259.0 136.5,259.0 140.5,261.1 C144.5,263.2 148.5,267.9 152.5,272.1 C160.5,280.5 168.6,289.5 176.6,300.2 C184.6,310.9 192.7,326.3 200.7,336.4 C205.4,342.3 210.1,346.5 214.8,350.5 C220.2,355.0 225.5,361.5 230.9,361.5 C236.9,361.5 243.0,360.1 249.0,360.1 C253.7,360.1 258.3,360.9 263.0,360.9 C267.7,360.9 272.4,357.9 277.1,354.5 C281.8,351.1 286.5,345.5 291.2,340.4 C295.9,335.4 300.5,329.2 305.2,324.3 C311.2,318.0 317.3,307.3 323.3,307.3 C325.6,307.3 328.0,308.3 330.3,308.3 C336.9,308.3 343.5,296.0 350.1,291.2 C353.4,288.8 356.8,286.7 360.1,285.2 C369.5,281.0 378.9,277.1 388.3,277.1 C393.6,277.1 399.0,277.3 404.3,277.7 C411.0,278.2 417.7,280.1 424.4,280.1 C430.4,280.1 436.5,279.1 442.5,279.1 C450.5,279.1 458.6,284.2 466.6,284.2 C469.3,284.2 472.0,281.7 474.7,281.7 C479.4,281.7 484.0,285.3 488.7,286.2 C499.4,288.3 510.2,287.7 520.9,288.6 C527.6,289.2 534.3,290.2 541.0,290.6 C552.4,291.3 563.7,291.6 575.1,291.6 C580.5,291.6 585.8,291.1 591.2,290.2 C599.2,288.9 607.3,286.0 615.3,284.2 C620.2,283.1 625.1,281.9 630.0,281.1 C634.7,280.3 639.4,279.9 644.1,279.2 C653.2,277.8 662.3,275.2 671.4,274.4 C676.8,273.9 682.1,273.9 687.5,273.9 C691.8,273.9 696.1,276.1 700.4,280.0 C703.6,282.9 706.8,286.4 710.0,292.9 C712.2,297.3 714.3,304.5 716.5,310.6 C718.4,315.9 720.2,327.0 722.1,327.0 C725.6,327.0 729.0,315.6 732.5,310.6 C735.2,306.7 737.9,303.1 740.6,300.1 C744.1,296.3 747.5,290.5 751.0,290.5 C752.9,290.5 754.8,298.5 756.7,298.5 C758.3,298.5 759.9,291.7 761.5,291.3 C764.7,290.5 767.9,290.5 771.1,290.5 C772.2,290.5 773.2,303.6 774.3,304.1 C777.5,305.7 780.8,305.7 784.0,305.7 C786.1,305.7 788.3,290.6 790.4,287.3 C792.5,284.0 794.7,284.0 796.8,284.0 C797.6,284.0 798.5,289.7 799.3,289.7 C802.0,289.7 804.6,280.0 807.3,280.0 C808.9,280.0 810.5,294.5 812.1,294.5 C814.3,294.5 816.4,294.5 818.6,292.9 C821.0,291.1 823.4,281.6 825.8,281.6 C827.1,281.6 828.5,290.5 829.8,290.5 C831.7,290.5 833.5,283.2 835.4,283.2 C837.6,283.2 839.7,283.2 841.9,284.0 C843.8,284.7 845.6,296.9 847.5,296.9 C848.8,296.9 850.2,290.5 851.5,290.5 C853.1,290.5 854.8,290.5 856.4,294.1 C858.6,298.9 860.7,309.5 862.9,321.5 C864.5,330.4 866.1,346.2 867.7,354.6 C870.4,368.6 873.0,383.6 875.7,383.6 C879.5,383.6 883.2,327.9 887.0,327.9 C888.6,327.9 890.2,327.9 891.8,331.1 C893.1,333.8 894.5,386.8 895.8,386.8 C896.6,386.8 897.4,382.8 898.2,382.8 C899.8,382.8 901.5,386.1 903.1,391.6 C905.2,398.7 907.4,423.0 909.5,423.0 C911.6,423.0 913.8,359.5 915.9,359.5 C917.2,359.5 918.6,400.5 919.9,400.5 C921.3,400.5 922.6,340.8 924.0,337.5 C925.3,334.3 926.7,334.3 928.0,334.3 C929.1,334.3 930.1,342.4 931.2,342.4 C932.5,342.4 933.9,330.6 935.2,327.9 C937.6,323.1 940.0,323.1 942.4,323.1 C944.0,323.1 945.7,323.3 947.3,327.9 C948.1,330.2 948.9,339.2 949.7,339.2 C950.5,339.2 951.3,331.1 952.1,331.1 C955.0,331.1 958.0,338.2 960.9,344.0 C963.6,349.4 966.3,351.0 969.0,364.3 C971.4,376.1 973.8,417.3 976.2,417.3 C978.1,417.3 979.9,399.7 981.8,399.7 C982.9,399.7 983.9,400.5 985.0,400.5 C987.7,400.5 990.4,387.1 993.1,387.1 C994.7,387.1 996.3,387.7 997.9,389.2 C999.0,390.2 1000.0,393.0 1001.1,394.0 C1004.9,397.6 1008.6,398.5 1012.4,398.9 C1015.9,399.3 1019.3,399.0 1022.8,399.7 C1024.7,400.1 1026.6,404.5 1028.5,404.5 C1029.6,404.5 1030.6,399.7 1031.7,399.7 C1033.3,399.7 1034.9,412.3 1036.5,415.7 C1038.1,419.1 1039.7,419.8 1041.3,419.8 C1043.4,419.8 1045.6,412.5 1047.7,412.5 C1049.6,412.5 1051.5,420.6 1053.4,420.6 C1056.6,420.6 1059.8,402.9 1063.0,402.9 C1065.2,402.9 1067.3,419.5 1069.5,427.8" stroke="#ff6a00" stroke-width="2.1" stroke-dasharray="1.6,0.7" fill="none"/></g>
<g clip-path="url(#cpa)"><path d="M51.1,181.0 C76.2,181.2 101.3,181.0 126.4,182.4 C130.4,182.6 134.5,183.3 138.5,185.4 C141.8,187.1 145.2,190.0 148.5,193.4 C153.9,198.9 159.2,206.9 164.6,213.5 C169.9,220.0 175.3,225.2 180.6,232.6 C184.6,238.2 188.7,244.4 192.7,251.7 C195.4,256.5 198.0,264.0 200.7,268.1 C205.4,275.3 210.1,277.9 214.8,282.1 C220.2,286.8 225.5,294.6 230.9,294.6 C236.9,294.6 243.0,292.4 249.0,292.2 C253.7,292.1 258.3,292.2 263.0,291.8 C267.0,291.5 271.1,289.3 275.1,286.2 C279.1,283.1 283.1,278.6 287.1,273.1 C291.8,266.6 296.5,256.3 301.2,249.7 C305.2,244.0 309.3,239.7 313.3,235.6 C317.3,231.5 321.3,225.2 325.3,225.2 C327.0,225.2 328.6,227.6 330.3,227.6 C332.0,227.6 333.7,223.4 335.4,221.5 C337.6,219.0 339.9,216.6 342.1,214.5 C344.8,211.9 347.4,209.7 350.1,207.5 C353.4,204.7 356.8,201.1 360.1,199.4 C366.8,195.9 373.5,194.8 380.2,194.8 C386.9,194.8 393.6,194.8 400.3,194.8 C409.0,194.8 417.7,198.4 426.4,198.4 C431.8,198.4 437.1,197.8 442.5,197.8 C447.9,197.8 453.2,202.4 458.6,202.4 C464.0,202.4 469.3,201.8 474.7,201.8 C478.7,201.8 482.7,204.7 486.7,205.5 C494.7,207.1 502.8,206.5 510.8,207.9 C514.2,208.5 517.5,210.0 520.9,210.5 C527.6,211.4 534.3,211.2 541.0,211.5 C552.4,212.1 563.7,213.5 575.1,213.5 C580.5,213.5 585.8,212.5 591.2,211.5 C599.2,210.0 607.3,207.2 615.3,205.5 C620.1,204.5 624.8,203.8 629.6,203.1 C642.5,201.2 655.3,198.2 668.2,198.2 C674.6,198.2 681.1,198.2 687.5,199.0 C691.8,199.5 696.1,201.0 700.4,205.5 C703.6,208.9 706.8,213.7 710.0,220.8 C714.1,229.9 718.3,255.9 722.4,255.9 C724.7,255.9 727.0,245.7 729.3,241.0 C732.5,234.4 735.8,227.1 739.0,222.4 C743.0,216.5 747.0,210.3 751.0,210.3 C752.9,210.3 754.8,220.8 756.7,220.8 C758.3,220.8 759.9,214.3 761.5,214.3 C764.7,214.3 767.9,214.3 771.1,215.9 C772.2,216.4 773.2,227.8 774.3,228.8 C775.9,230.4 777.6,230.4 779.2,230.4 C780.8,230.4 782.4,230.4 784.0,230.4 C786.4,230.4 788.8,211.6 791.2,209.5 C793.1,207.9 794.9,207.9 796.8,207.9 C797.6,207.9 798.5,214.3 799.3,214.3 C802.0,214.3 804.6,205.5 807.3,205.5 C808.9,205.5 810.5,220.8 812.1,220.8 C814.3,220.8 816.4,220.5 818.6,218.3 C821.0,215.8 823.4,206.3 825.8,206.3 C827.1,206.3 828.5,214.3 829.8,214.3 C831.1,214.3 832.5,206.7 833.8,206.3 C836.5,205.5 839.2,205.5 841.9,205.5 C843.8,205.5 845.6,219.5 847.5,219.5 C848.8,219.5 850.2,211.9 851.5,211.9 C853.1,211.9 854.8,218.3 856.4,225.0 C859.6,238.2 862.9,265.4 866.1,278.1 C867.4,283.3 868.8,282.9 870.1,287.7 C872.0,294.5 873.8,315.0 875.7,315.0 C877.3,315.0 878.9,298.6 880.5,289.3 C882.4,278.3 884.3,253.9 886.2,253.9 C887.5,253.9 888.9,253.9 890.2,257.2 C892.3,262.5 894.5,323.1 896.6,323.1 C897.1,323.1 897.7,317.4 898.2,317.4 C900.4,317.4 902.5,320.9 904.7,329.5 C906.3,335.8 907.9,358.6 909.5,358.6 C911.6,358.6 913.8,281.3 915.9,281.3 C917.0,281.3 918.0,329.5 919.1,329.5 C920.7,329.5 922.4,271.0 924.0,263.6 C925.6,256.4 927.2,256.4 928.8,256.4 C929.6,256.4 930.4,267.6 931.2,267.6 C932.5,267.6 933.9,256.4 935.2,253.9 C937.1,250.4 938.9,250.4 940.8,250.4 C942.7,250.4 944.6,250.4 946.5,253.1 C947.6,254.6 948.6,270.0 949.7,270.0 C950.5,270.0 951.3,262.0 952.1,262.0 C954.5,262.0 956.9,271.9 959.3,274.8 C960.9,276.7 962.5,275.2 964.1,279.7 C966.8,287.3 969.5,305.9 972.2,324.7 C973.5,333.5 974.7,356.5 976.0,356.5 C977.9,356.5 979.9,332.7 981.8,332.7 C982.3,332.7 982.9,334.3 983.4,334.3 C986.1,334.3 988.8,320.7 991.5,320.7 C993.4,320.7 995.2,320.7 997.1,322.3 C998.4,323.4 999.8,327.4 1001.1,328.7 C1004.9,332.5 1008.6,332.9 1012.4,333.5 C1016.1,334.1 1019.9,333.6 1023.6,335.1 C1025.2,335.7 1026.9,340.8 1028.5,340.8 C1029.6,340.8 1030.6,335.9 1031.7,335.9 C1033.3,335.9 1034.9,352.0 1036.5,355.2 C1038.1,358.4 1039.7,358.4 1041.3,358.4 C1043.2,358.4 1045.0,350.4 1046.9,350.4 C1049.1,350.4 1051.2,358.4 1053.4,358.4 C1056.6,358.4 1059.8,340.0 1063.0,340.0 C1064.9,340.0 1066.7,356.7 1068.6,365.1" stroke="#1c1f1c" stroke-opacity="0.55" stroke-width="4.2" fill="none" stroke-linejoin="round" stroke-linecap="round"/>
<path d="M51.1,181.0 C76.2,181.2 101.3,181.0 126.4,182.4 C130.4,182.6 134.5,183.3 138.5,185.4 C141.8,187.1 145.2,190.0 148.5,193.4 C153.9,198.9 159.2,206.9 164.6,213.5 C169.9,220.0 175.3,225.2 180.6,232.6 C184.6,238.2 188.7,244.4 192.7,251.7 C195.4,256.5 198.0,264.0 200.7,268.1 C205.4,275.3 210.1,277.9 214.8,282.1 C220.2,286.8 225.5,294.6 230.9,294.6 C236.9,294.6 243.0,292.4 249.0,292.2 C253.7,292.1 258.3,292.2 263.0,291.8 C267.0,291.5 271.1,289.3 275.1,286.2 C279.1,283.1 283.1,278.6 287.1,273.1 C291.8,266.6 296.5,256.3 301.2,249.7 C305.2,244.0 309.3,239.7 313.3,235.6 C317.3,231.5 321.3,225.2 325.3,225.2 C327.0,225.2 328.6,227.6 330.3,227.6 C332.0,227.6 333.7,223.4 335.4,221.5 C337.6,219.0 339.9,216.6 342.1,214.5 C344.8,211.9 347.4,209.7 350.1,207.5 C353.4,204.7 356.8,201.1 360.1,199.4 C366.8,195.9 373.5,194.8 380.2,194.8 C386.9,194.8 393.6,194.8 400.3,194.8 C409.0,194.8 417.7,198.4 426.4,198.4 C431.8,198.4 437.1,197.8 442.5,197.8 C447.9,197.8 453.2,202.4 458.6,202.4 C464.0,202.4 469.3,201.8 474.7,201.8 C478.7,201.8 482.7,204.7 486.7,205.5 C494.7,207.1 502.8,206.5 510.8,207.9 C514.2,208.5 517.5,210.0 520.9,210.5 C527.6,211.4 534.3,211.2 541.0,211.5 C552.4,212.1 563.7,213.5 575.1,213.5 C580.5,213.5 585.8,212.5 591.2,211.5 C599.2,210.0 607.3,207.2 615.3,205.5 C620.1,204.5 624.8,203.8 629.6,203.1 C642.5,201.2 655.3,198.2 668.2,198.2 C674.6,198.2 681.1,198.2 687.5,199.0 C691.8,199.5 696.1,201.0 700.4,205.5 C703.6,208.9 706.8,213.7 710.0,220.8 C714.1,229.9 718.3,255.9 722.4,255.9 C724.7,255.9 727.0,245.7 729.3,241.0 C732.5,234.4 735.8,227.1 739.0,222.4 C743.0,216.5 747.0,210.3 751.0,210.3 C752.9,210.3 754.8,220.8 756.7,220.8 C758.3,220.8 759.9,214.3 761.5,214.3 C764.7,214.3 767.9,214.3 771.1,215.9 C772.2,216.4 773.2,227.8 774.3,228.8 C775.9,230.4 777.6,230.4 779.2,230.4 C780.8,230.4 782.4,230.4 784.0,230.4 C786.4,230.4 788.8,211.6 791.2,209.5 C793.1,207.9 794.9,207.9 796.8,207.9 C797.6,207.9 798.5,214.3 799.3,214.3 C802.0,214.3 804.6,205.5 807.3,205.5 C808.9,205.5 810.5,220.8 812.1,220.8 C814.3,220.8 816.4,220.5 818.6,218.3 C821.0,215.8 823.4,206.3 825.8,206.3 C827.1,206.3 828.5,214.3 829.8,214.3 C831.1,214.3 832.5,206.7 833.8,206.3 C836.5,205.5 839.2,205.5 841.9,205.5 C843.8,205.5 845.6,219.5 847.5,219.5 C848.8,219.5 850.2,211.9 851.5,211.9 C853.1,211.9 854.8,218.3 856.4,225.0 C859.6,238.2 862.9,265.4 866.1,278.1 C867.4,283.3 868.8,282.9 870.1,287.7 C872.0,294.5 873.8,315.0 875.7,315.0 C877.3,315.0 878.9,298.6 880.5,289.3 C882.4,278.3 884.3,253.9 886.2,253.9 C887.5,253.9 888.9,253.9 890.2,257.2 C892.3,262.5 894.5,323.1 896.6,323.1 C897.1,323.1 897.7,317.4 898.2,317.4 C900.4,317.4 902.5,320.9 904.7,329.5 C906.3,335.8 907.9,358.6 909.5,358.6 C911.6,358.6 913.8,281.3 915.9,281.3 C917.0,281.3 918.0,329.5 919.1,329.5 C920.7,329.5 922.4,271.0 924.0,263.6 C925.6,256.4 927.2,256.4 928.8,256.4 C929.6,256.4 930.4,267.6 931.2,267.6 C932.5,267.6 933.9,256.4 935.2,253.9 C937.1,250.4 938.9,250.4 940.8,250.4 C942.7,250.4 944.6,250.4 946.5,253.1 C947.6,254.6 948.6,270.0 949.7,270.0 C950.5,270.0 951.3,262.0 952.1,262.0 C954.5,262.0 956.9,271.9 959.3,274.8 C960.9,276.7 962.5,275.2 964.1,279.7 C966.8,287.3 969.5,305.9 972.2,324.7 C973.5,333.5 974.7,356.5 976.0,356.5 C977.9,356.5 979.9,332.7 981.8,332.7 C982.3,332.7 982.9,334.3 983.4,334.3 C986.1,334.3 988.8,320.7 991.5,320.7 C993.4,320.7 995.2,320.7 997.1,322.3 C998.4,323.4 999.8,327.4 1001.1,328.7 C1004.9,332.5 1008.6,332.9 1012.4,333.5 C1016.1,334.1 1019.9,333.6 1023.6,335.1 C1025.2,335.7 1026.9,340.8 1028.5,340.8 C1029.6,340.8 1030.6,335.9 1031.7,335.9 C1033.3,335.9 1034.9,352.0 1036.5,355.2 C1038.1,358.4 1039.7,358.4 1041.3,358.4 C1043.2,358.4 1045.0,350.4 1046.9,350.4 C1049.1,350.4 1051.2,358.4 1053.4,358.4 C1056.6,358.4 1059.8,340.0 1063.0,340.0 C1064.9,340.0 1066.7,356.7 1068.6,365.1" stroke="#ff0066" stroke-width="2.6" fill="none" stroke-linejoin="round" stroke-linecap="round"/></g>
<g clip-path="url(#cpb)"><path d="M51.1,181.0 C76.2,181.2 101.3,181.0 126.4,182.4 C130.4,182.6 134.5,183.3 138.5,185.4 C141.8,187.1 145.2,190.0 148.5,193.4 C153.9,198.9 159.2,206.9 164.6,213.5 C169.9,220.0 175.3,225.2 180.6,232.6 C184.6,238.2 188.7,244.4 192.7,251.7 C195.4,256.5 198.0,264.0 200.7,268.1 C205.4,275.3 210.1,277.9 214.8,282.1 C220.2,286.8 225.5,294.6 230.9,294.6 C236.9,294.6 243.0,292.4 249.0,292.2 C253.7,292.1 258.3,292.2 263.0,291.8 C267.0,291.5 271.1,289.3 275.1,286.2 C279.1,283.1 283.1,278.6 287.1,273.1 C291.8,266.6 296.5,256.3 301.2,249.7 C305.2,244.0 309.3,239.7 313.3,235.6 C317.3,231.5 321.3,225.2 325.3,225.2 C327.0,225.2 328.6,227.6 330.3,227.6 C332.0,227.6 333.7,223.4 335.4,221.5 C337.6,219.0 339.9,216.6 342.1,214.5 C344.8,211.9 347.4,209.7 350.1,207.5 C353.4,204.7 356.8,201.1 360.1,199.4 C366.8,195.9 373.5,194.8 380.2,194.8 C386.9,194.8 393.6,194.8 400.3,194.8 C409.0,194.8 417.7,198.4 426.4,198.4 C431.8,198.4 437.1,197.8 442.5,197.8 C447.9,197.8 453.2,202.4 458.6,202.4 C464.0,202.4 469.3,201.8 474.7,201.8 C478.7,201.8 482.7,204.7 486.7,205.5 C494.7,207.1 502.8,206.5 510.8,207.9 C514.2,208.5 517.5,210.0 520.9,210.5 C527.6,211.4 534.3,211.2 541.0,211.5 C552.4,212.1 563.7,213.5 575.1,213.5 C580.5,213.5 585.8,212.5 591.2,211.5 C599.2,210.0 607.3,207.2 615.3,205.5 C620.1,204.5 624.8,203.8 629.6,203.1 C642.5,201.2 655.3,198.2 668.2,198.2 C674.6,198.2 681.1,198.2 687.5,199.0 C691.8,199.5 696.1,201.0 700.4,205.5 C703.6,208.9 706.8,213.7 710.0,220.8 C714.1,229.9 718.3,255.9 722.4,255.9 C724.7,255.9 727.0,245.7 729.3,241.0 C732.5,234.4 735.8,227.1 739.0,222.4 C743.0,216.5 747.0,210.3 751.0,210.3 C752.9,210.3 754.8,220.8 756.7,220.8 C758.3,220.8 759.9,214.3 761.5,214.3 C764.7,214.3 767.9,214.3 771.1,215.9 C772.2,216.4 773.2,227.8 774.3,228.8 C775.9,230.4 777.6,230.4 779.2,230.4 C780.8,230.4 782.4,230.4 784.0,230.4 C786.4,230.4 788.8,211.6 791.2,209.5 C793.1,207.9 794.9,207.9 796.8,207.9 C797.6,207.9 798.5,214.3 799.3,214.3 C802.0,214.3 804.6,205.5 807.3,205.5 C808.9,205.5 810.5,220.8 812.1,220.8 C814.3,220.8 816.4,220.5 818.6,218.3 C821.0,215.8 823.4,206.3 825.8,206.3 C827.1,206.3 828.5,214.3 829.8,214.3 C831.1,214.3 832.5,206.7 833.8,206.3 C836.5,205.5 839.2,205.5 841.9,205.5 C843.8,205.5 845.6,219.5 847.5,219.5 C848.8,219.5 850.2,211.9 851.5,211.9 C853.1,211.9 854.8,218.3 856.4,225.0 C859.6,238.2 862.9,265.4 866.1,278.1 C867.4,283.3 868.8,282.9 870.1,287.7 C872.0,294.5 873.8,315.0 875.7,315.0 C877.3,315.0 878.9,298.6 880.5,289.3 C882.4,278.3 884.3,253.9 886.2,253.9 C887.5,253.9 888.9,253.9 890.2,257.2 C892.3,262.5 894.5,323.1 896.6,323.1 C897.1,323.1 897.7,317.4 898.2,317.4 C900.4,317.4 902.5,320.9 904.7,329.5 C906.3,335.8 907.9,358.6 909.5,358.6 C911.6,358.6 913.8,281.3 915.9,281.3 C917.0,281.3 918.0,329.5 919.1,329.5 C920.7,329.5 922.4,271.0 924.0,263.6 C925.6,256.4 927.2,256.4 928.8,256.4 C929.6,256.4 930.4,267.6 931.2,267.6 C932.5,267.6 933.9,256.4 935.2,253.9 C937.1,250.4 938.9,250.4 940.8,250.4 C942.7,250.4 944.6,250.4 946.5,253.1 C947.6,254.6 948.6,270.0 949.7,270.0 C950.5,270.0 951.3,262.0 952.1,262.0 C954.5,262.0 956.9,271.9 959.3,274.8 C960.9,276.7 962.5,275.2 964.1,279.7 C966.8,287.3 969.5,305.9 972.2,324.7 C973.5,333.5 974.7,356.5 976.0,356.5 C977.9,356.5 979.9,332.7 981.8,332.7 C982.3,332.7 982.9,334.3 983.4,334.3 C986.1,334.3 988.8,320.7 991.5,320.7 C993.4,320.7 995.2,320.7 997.1,322.3 C998.4,323.4 999.8,327.4 1001.1,328.7 C1004.9,332.5 1008.6,332.9 1012.4,333.5 C1016.1,334.1 1019.9,333.6 1023.6,335.1 C1025.2,335.7 1026.9,340.8 1028.5,340.8 C1029.6,340.8 1030.6,335.9 1031.7,335.9 C1033.3,335.9 1034.9,352.0 1036.5,355.2 C1038.1,358.4 1039.7,358.4 1041.3,358.4 C1043.2,358.4 1045.0,350.4 1046.9,350.4 C1049.1,350.4 1051.2,358.4 1053.4,358.4 C1056.6,358.4 1059.8,340.0 1063.0,340.0 C1064.9,340.0 1066.7,356.7 1068.6,365.1" stroke="#ff0066" stroke-width="2.1" stroke-dasharray="1.6,0.7" fill="none"/></g>
<g clip-path="url(#cpa)"><path d="M51.1,121.1 C83.6,121.1 116.0,121.1 148.5,121.1 C153.9,121.1 159.2,123.2 164.6,124.5 C171.3,126.1 178.0,127.2 184.7,130.1 C190.0,132.4 195.4,139.6 200.7,139.6 C204.1,139.6 207.4,139.6 210.8,139.6 C216.8,139.6 222.9,138.5 228.9,137.1 C233.6,136.0 238.2,133.5 242.9,132.5 C248.3,131.4 253.6,131.8 259.0,131.1 C269.7,129.8 280.5,127.4 291.2,126.1 C295.2,125.6 299.2,125.1 303.2,125.1 C309.9,125.1 316.6,125.1 323.3,125.1 C325.6,125.1 328.0,129.1 330.3,129.1 C332.0,129.1 333.7,126.5 335.4,126.1 C336.9,125.7 338.5,125.8 340.0,125.7 C346.7,125.3 353.4,124.1 360.1,124.1 C369.5,124.1 378.9,124.1 388.3,124.1 C397.0,124.1 405.7,125.2 414.4,125.7 C426.5,126.4 438.5,127.0 450.6,127.7 C462.6,128.4 474.7,129.3 486.7,130.1 C498.1,130.8 509.5,131.6 520.9,132.1 C527.6,132.4 534.3,132.7 541.0,132.7 C551.0,132.7 561.1,132.5 571.1,130.1 C573.1,129.6 575.1,127.7 577.1,127.7 C581.1,127.7 585.2,130.1 589.2,130.1 C597.9,130.1 606.6,126.5 615.3,126.1 C620.1,125.9 624.8,125.9 629.6,125.9 C634.4,125.9 639.3,127.2 644.1,127.2 C658.6,127.2 673.0,125.1 687.5,125.1 C692.9,125.1 698.2,125.1 703.6,125.9 C706.3,126.3 708.9,126.8 711.6,129.1 C714.6,131.6 717.5,140.7 720.5,140.7 C722.4,140.7 724.2,134.2 726.1,132.3 C729.3,129.1 732.6,128.5 735.8,127.5 C741.1,125.9 746.5,125.6 751.8,125.6 C754.0,125.6 756.1,131.4 758.3,131.5 C762.6,131.8 766.8,131.6 771.1,132.0 C773.0,132.2 774.9,140.7 776.8,140.7 C778.7,140.7 780.5,140.7 782.4,139.6 C785.1,138.0 787.7,131.8 790.4,129.9 C792.5,128.3 794.7,128.3 796.8,128.3 C797.6,128.3 798.5,133.9 799.3,133.9 C801.7,133.9 804.1,126.7 806.5,126.7 C808.1,126.7 809.7,134.7 811.3,134.7 C812.4,134.7 813.4,131.5 814.5,131.5 C815.9,131.5 817.2,136.4 818.6,136.4 C821.0,136.4 823.4,127.5 825.8,127.5 C827.4,127.5 829.0,132.3 830.6,132.3 C832.7,132.3 834.9,127.5 837.0,127.5 C838.6,127.5 840.3,127.5 841.9,128.3 C844.0,129.3 846.2,138.8 848.3,138.8 C849.4,138.8 850.4,133.9 851.5,133.9 C853.1,133.9 854.8,133.9 856.4,137.2 C859.1,142.7 861.8,160.3 864.5,169.3 C866.1,174.6 867.7,176.0 869.3,182.2 C870.9,188.4 872.5,206.3 874.1,206.3 C875.7,206.3 877.3,190.5 878.9,183.8 C881.1,174.7 883.2,159.7 885.4,159.7 C887.0,159.7 888.6,164.8 890.2,177.3 C891.8,189.8 893.4,234.6 895.0,234.6 C897.7,234.6 900.4,218.3 903.1,218.3 C904.4,218.3 905.8,241.1 907.1,241.1 C908.2,241.1 909.2,218.0 910.3,207.9 C911.9,192.8 913.5,166.9 915.1,166.9 C916.4,166.9 917.8,203.1 919.1,203.1 C920.2,203.1 921.2,152.6 922.3,151.6 C923.9,150.0 925.6,150.0 927.2,150.0 C928.0,150.0 928.8,152.4 929.6,152.4 C931.5,152.4 933.3,141.0 935.2,139.6 C937.3,138.0 939.5,138.0 941.6,138.0 C943.2,138.0 944.9,138.0 946.5,139.6 C947.3,140.4 948.1,151.6 948.9,151.6 C950.0,151.6 951.0,142.8 952.1,142.8 C954.5,142.8 956.9,147.1 959.3,151.6 C960.4,153.6 961.4,155.7 962.5,159.7 C964.7,167.8 966.8,174.6 969.0,191.8 C970.9,206.6 972.7,253.1 974.6,253.1 C976.5,253.1 978.3,191.8 980.2,191.8 C981.3,191.8 982.3,191.8 983.4,191.8 C985.6,191.8 987.7,167.7 989.9,167.7 C992.6,167.7 995.2,168.7 997.9,170.9 C999.0,171.8 1000.0,173.8 1001.1,174.9 C1004.9,178.7 1008.6,183.8 1012.4,183.8 C1015.1,183.8 1017.7,181.8 1020.4,181.8 C1022.5,181.8 1024.7,191.8 1026.8,191.8 C1027.9,191.8 1029.0,184.6 1030.1,184.6 C1032.2,184.6 1034.4,215.9 1036.5,215.9 C1039.4,215.9 1042.4,195.0 1045.3,195.0 C1047.5,195.0 1049.6,206.3 1051.8,206.3 C1054.5,206.3 1057.1,179.0 1059.8,179.0 C1060.9,179.0 1061.9,179.0 1063.0,180.6 C1064.1,182.2 1065.1,222.4 1066.2,222.4 C1067.3,222.4 1068.4,219.1 1069.5,217.5" stroke="#1c1f1c" stroke-opacity="0.55" stroke-width="4.2" fill="none" stroke-linejoin="round" stroke-linecap="round"/>
<path d="M51.1,121.1 C83.6,121.1 116.0,121.1 148.5,121.1 C153.9,121.1 159.2,123.2 164.6,124.5 C171.3,126.1 178.0,127.2 184.7,130.1 C190.0,132.4 195.4,139.6 200.7,139.6 C204.1,139.6 207.4,139.6 210.8,139.6 C216.8,139.6 222.9,138.5 228.9,137.1 C233.6,136.0 238.2,133.5 242.9,132.5 C248.3,131.4 253.6,131.8 259.0,131.1 C269.7,129.8 280.5,127.4 291.2,126.1 C295.2,125.6 299.2,125.1 303.2,125.1 C309.9,125.1 316.6,125.1 323.3,125.1 C325.6,125.1 328.0,129.1 330.3,129.1 C332.0,129.1 333.7,126.5 335.4,126.1 C336.9,125.7 338.5,125.8 340.0,125.7 C346.7,125.3 353.4,124.1 360.1,124.1 C369.5,124.1 378.9,124.1 388.3,124.1 C397.0,124.1 405.7,125.2 414.4,125.7 C426.5,126.4 438.5,127.0 450.6,127.7 C462.6,128.4 474.7,129.3 486.7,130.1 C498.1,130.8 509.5,131.6 520.9,132.1 C527.6,132.4 534.3,132.7 541.0,132.7 C551.0,132.7 561.1,132.5 571.1,130.1 C573.1,129.6 575.1,127.7 577.1,127.7 C581.1,127.7 585.2,130.1 589.2,130.1 C597.9,130.1 606.6,126.5 615.3,126.1 C620.1,125.9 624.8,125.9 629.6,125.9 C634.4,125.9 639.3,127.2 644.1,127.2 C658.6,127.2 673.0,125.1 687.5,125.1 C692.9,125.1 698.2,125.1 703.6,125.9 C706.3,126.3 708.9,126.8 711.6,129.1 C714.6,131.6 717.5,140.7 720.5,140.7 C722.4,140.7 724.2,134.2 726.1,132.3 C729.3,129.1 732.6,128.5 735.8,127.5 C741.1,125.9 746.5,125.6 751.8,125.6 C754.0,125.6 756.1,131.4 758.3,131.5 C762.6,131.8 766.8,131.6 771.1,132.0 C773.0,132.2 774.9,140.7 776.8,140.7 C778.7,140.7 780.5,140.7 782.4,139.6 C785.1,138.0 787.7,131.8 790.4,129.9 C792.5,128.3 794.7,128.3 796.8,128.3 C797.6,128.3 798.5,133.9 799.3,133.9 C801.7,133.9 804.1,126.7 806.5,126.7 C808.1,126.7 809.7,134.7 811.3,134.7 C812.4,134.7 813.4,131.5 814.5,131.5 C815.9,131.5 817.2,136.4 818.6,136.4 C821.0,136.4 823.4,127.5 825.8,127.5 C827.4,127.5 829.0,132.3 830.6,132.3 C832.7,132.3 834.9,127.5 837.0,127.5 C838.6,127.5 840.3,127.5 841.9,128.3 C844.0,129.3 846.2,138.8 848.3,138.8 C849.4,138.8 850.4,133.9 851.5,133.9 C853.1,133.9 854.8,133.9 856.4,137.2 C859.1,142.7 861.8,160.3 864.5,169.3 C866.1,174.6 867.7,176.0 869.3,182.2 C870.9,188.4 872.5,206.3 874.1,206.3 C875.7,206.3 877.3,190.5 878.9,183.8 C881.1,174.7 883.2,159.7 885.4,159.7 C887.0,159.7 888.6,164.8 890.2,177.3 C891.8,189.8 893.4,234.6 895.0,234.6 C897.7,234.6 900.4,218.3 903.1,218.3 C904.4,218.3 905.8,241.1 907.1,241.1 C908.2,241.1 909.2,218.0 910.3,207.9 C911.9,192.8 913.5,166.9 915.1,166.9 C916.4,166.9 917.8,203.1 919.1,203.1 C920.2,203.1 921.2,152.6 922.3,151.6 C923.9,150.0 925.6,150.0 927.2,150.0 C928.0,150.0 928.8,152.4 929.6,152.4 C931.5,152.4 933.3,141.0 935.2,139.6 C937.3,138.0 939.5,138.0 941.6,138.0 C943.2,138.0 944.9,138.0 946.5,139.6 C947.3,140.4 948.1,151.6 948.9,151.6 C950.0,151.6 951.0,142.8 952.1,142.8 C954.5,142.8 956.9,147.1 959.3,151.6 C960.4,153.6 961.4,155.7 962.5,159.7 C964.7,167.8 966.8,174.6 969.0,191.8 C970.9,206.6 972.7,253.1 974.6,253.1 C976.5,253.1 978.3,191.8 980.2,191.8 C981.3,191.8 982.3,191.8 983.4,191.8 C985.6,191.8 987.7,167.7 989.9,167.7 C992.6,167.7 995.2,168.7 997.9,170.9 C999.0,171.8 1000.0,173.8 1001.1,174.9 C1004.9,178.7 1008.6,183.8 1012.4,183.8 C1015.1,183.8 1017.7,181.8 1020.4,181.8 C1022.5,181.8 1024.7,191.8 1026.8,191.8 C1027.9,191.8 1029.0,184.6 1030.1,184.6 C1032.2,184.6 1034.4,215.9 1036.5,215.9 C1039.4,215.9 1042.4,195.0 1045.3,195.0 C1047.5,195.0 1049.6,206.3 1051.8,206.3 C1054.5,206.3 1057.1,179.0 1059.8,179.0 C1060.9,179.0 1061.9,179.0 1063.0,180.6 C1064.1,182.2 1065.1,222.4 1066.2,222.4 C1067.3,222.4 1068.4,219.1 1069.5,217.5" stroke="#e600ff" stroke-width="2.6" fill="none" stroke-linejoin="round" stroke-linecap="round"/></g>
<g clip-path="url(#cpb)"><path d="M51.1,121.1 C83.6,121.1 116.0,121.1 148.5,121.1 C153.9,121.1 159.2,123.2 164.6,124.5 C171.3,126.1 178.0,127.2 184.7,130.1 C190.0,132.4 195.4,139.6 200.7,139.6 C204.1,139.6 207.4,139.6 210.8,139.6 C216.8,139.6 222.9,138.5 228.9,137.1 C233.6,136.0 238.2,133.5 242.9,132.5 C248.3,131.4 253.6,131.8 259.0,131.1 C269.7,129.8 280.5,127.4 291.2,126.1 C295.2,125.6 299.2,125.1 303.2,125.1 C309.9,125.1 316.6,125.1 323.3,125.1 C325.6,125.1 328.0,129.1 330.3,129.1 C332.0,129.1 333.7,126.5 335.4,126.1 C336.9,125.7 338.5,125.8 340.0,125.7 C346.7,125.3 353.4,124.1 360.1,124.1 C369.5,124.1 378.9,124.1 388.3,124.1 C397.0,124.1 405.7,125.2 414.4,125.7 C426.5,126.4 438.5,127.0 450.6,127.7 C462.6,128.4 474.7,129.3 486.7,130.1 C498.1,130.8 509.5,131.6 520.9,132.1 C527.6,132.4 534.3,132.7 541.0,132.7 C551.0,132.7 561.1,132.5 571.1,130.1 C573.1,129.6 575.1,127.7 577.1,127.7 C581.1,127.7 585.2,130.1 589.2,130.1 C597.9,130.1 606.6,126.5 615.3,126.1 C620.1,125.9 624.8,125.9 629.6,125.9 C634.4,125.9 639.3,127.2 644.1,127.2 C658.6,127.2 673.0,125.1 687.5,125.1 C692.9,125.1 698.2,125.1 703.6,125.9 C706.3,126.3 708.9,126.8 711.6,129.1 C714.6,131.6 717.5,140.7 720.5,140.7 C722.4,140.7 724.2,134.2 726.1,132.3 C729.3,129.1 732.6,128.5 735.8,127.5 C741.1,125.9 746.5,125.6 751.8,125.6 C754.0,125.6 756.1,131.4 758.3,131.5 C762.6,131.8 766.8,131.6 771.1,132.0 C773.0,132.2 774.9,140.7 776.8,140.7 C778.7,140.7 780.5,140.7 782.4,139.6 C785.1,138.0 787.7,131.8 790.4,129.9 C792.5,128.3 794.7,128.3 796.8,128.3 C797.6,128.3 798.5,133.9 799.3,133.9 C801.7,133.9 804.1,126.7 806.5,126.7 C808.1,126.7 809.7,134.7 811.3,134.7 C812.4,134.7 813.4,131.5 814.5,131.5 C815.9,131.5 817.2,136.4 818.6,136.4 C821.0,136.4 823.4,127.5 825.8,127.5 C827.4,127.5 829.0,132.3 830.6,132.3 C832.7,132.3 834.9,127.5 837.0,127.5 C838.6,127.5 840.3,127.5 841.9,128.3 C844.0,129.3 846.2,138.8 848.3,138.8 C849.4,138.8 850.4,133.9 851.5,133.9 C853.1,133.9 854.8,133.9 856.4,137.2 C859.1,142.7 861.8,160.3 864.5,169.3 C866.1,174.6 867.7,176.0 869.3,182.2 C870.9,188.4 872.5,206.3 874.1,206.3 C875.7,206.3 877.3,190.5 878.9,183.8 C881.1,174.7 883.2,159.7 885.4,159.7 C887.0,159.7 888.6,164.8 890.2,177.3 C891.8,189.8 893.4,234.6 895.0,234.6 C897.7,234.6 900.4,218.3 903.1,218.3 C904.4,218.3 905.8,241.1 907.1,241.1 C908.2,241.1 909.2,218.0 910.3,207.9 C911.9,192.8 913.5,166.9 915.1,166.9 C916.4,166.9 917.8,203.1 919.1,203.1 C920.2,203.1 921.2,152.6 922.3,151.6 C923.9,150.0 925.6,150.0 927.2,150.0 C928.0,150.0 928.8,152.4 929.6,152.4 C931.5,152.4 933.3,141.0 935.2,139.6 C937.3,138.0 939.5,138.0 941.6,138.0 C943.2,138.0 944.9,138.0 946.5,139.6 C947.3,140.4 948.1,151.6 948.9,151.6 C950.0,151.6 951.0,142.8 952.1,142.8 C954.5,142.8 956.9,147.1 959.3,151.6 C960.4,153.6 961.4,155.7 962.5,159.7 C964.7,167.8 966.8,174.6 969.0,191.8 C970.9,206.6 972.7,253.1 974.6,253.1 C976.5,253.1 978.3,191.8 980.2,191.8 C981.3,191.8 982.3,191.8 983.4,191.8 C985.6,191.8 987.7,167.7 989.9,167.7 C992.6,167.7 995.2,168.7 997.9,170.9 C999.0,171.8 1000.0,173.8 1001.1,174.9 C1004.9,178.7 1008.6,183.8 1012.4,183.8 C1015.1,183.8 1017.7,181.8 1020.4,181.8 C1022.5,181.8 1024.7,191.8 1026.8,191.8 C1027.9,191.8 1029.0,184.6 1030.1,184.6 C1032.2,184.6 1034.4,215.9 1036.5,215.9 C1039.4,215.9 1042.4,195.0 1045.3,195.0 C1047.5,195.0 1049.6,206.3 1051.8,206.3 C1054.5,206.3 1057.1,179.0 1059.8,179.0 C1060.9,179.0 1061.9,179.0 1063.0,180.6 C1064.1,182.2 1065.1,222.4 1066.2,222.4 C1067.3,222.4 1068.4,219.1 1069.5,217.5" stroke="#e600ff" stroke-width="2.1" stroke-dasharray="1.6,0.7" fill="none"/></g>
<rect x="1068.6" y="337.6" width="9.7" height="2.6" fill="#e600ff"/>
<rect x="1068.6" y="394" width="9.7" height="2.6" fill="#ff0066"/>
<rect x="1068.6" y="450.2" width="9.7" height="2.6" fill="#ff6a00"/>
<rect x="1068.6" y="563.3" width="9.7" height="2.6" fill="#00ff00"/>
<rect x="0" y="650" width="1128" height="1.6" fill="#c8c8c8"/>
<path d="M51.8,607.4 C94.5,607.4 137.3,607.4 180.0,608.0 C187.2,608.1 194.5,610.7 201.7,610.7 C214.5,610.7 227.2,609.8 240.0,609.5 C269.0,608.8 298.0,608.0 327.0,608.0 C345.2,608.0 363.5,608.0 381.7,608.0 C428.9,608.0 476.2,609.6 523.4,609.6 C548.9,609.6 574.3,608.5 599.8,608.5 C636.1,608.5 672.5,608.5 708.8,608.5 C712.4,608.5 716.1,610.7 719.7,610.7 C723.3,610.7 727.0,609.0 730.6,609.0 C741.5,609.0 752.5,609.0 763.4,609.0 C767.9,609.0 772.5,610.7 777.0,610.7 C783.3,610.7 789.7,609.4 796.0,609.0 C799.5,608.8 803.1,608.6 806.6,608.6 C819.8,608.6 832.9,608.6 846.1,609.3 C849.7,609.5 853.4,609.8 857.0,611.3 C860.7,612.8 864.3,615.8 868.0,618.5 C870.2,620.1 872.4,624.0 874.6,624.0 C878.3,624.0 881.9,615.2 885.6,615.2 C888.5,615.2 891.4,629.5 894.3,629.5 C897.2,629.5 900.2,627.3 903.1,627.3 C904.6,627.3 906.0,631.2 907.5,631.2 C910.1,631.2 912.6,616.8 915.2,616.8 C916.3,616.8 917.4,623.3 918.5,623.3 C920.0,623.3 921.4,613.0 922.9,613.0 C925.1,613.0 927.2,613.0 929.4,613.0 C933.8,613.0 938.2,610.8 942.6,610.8 C945.5,610.8 948.5,611.3 951.4,611.9 C955.1,612.7 958.7,612.0 962.4,615.2 C966.4,618.7 970.4,633.4 974.4,633.4 C977.0,633.4 979.5,624.7 982.1,621.8 C984.3,619.3 986.5,616.8 988.7,616.8 C996.0,616.8 1003.3,618.7 1010.6,619.0 C1016.5,619.2 1022.3,619.0 1028.2,620.1 C1030.7,620.6 1033.3,626.2 1035.8,626.2 C1039.1,626.2 1042.4,622.5 1045.7,622.5 C1047.9,622.5 1050.1,624.4 1052.3,624.4 C1054.9,624.4 1057.4,618.5 1060.0,618.5 C1061.8,618.5 1063.7,627.3 1065.5,627.3 C1066.6,627.3 1067.7,627.3 1068.8,627.3 L1068.8,650.8 C1071.7,650.8 1074.6,650.8 1077.5,650.8" stroke="#008a00" stroke-width="1.3" fill="none" stroke-linejoin="round"/>
<rect x="1068.8" y="649.8" width="8.7" height="2" fill="#008a00"/>
<rect x="0" y="606.5" width="4" height="1" fill="#e0e0e0"/><text x="4.5" y="611.2" font-size="12" fill="#e8e8e8" font-family="Liberation Sans">100</text>
<rect x="0" y="692.5" width="4" height="1" fill="#e0e0e0"/><rect x="4.5" y="692.5" width="3.5" height="1" fill="#e0e0e0"/><text x="8.5" y="697.5" font-size="12" fill="#e8e8e8" font-family="Liberation Sans">100</text>
<text x="1126" y="610" text-anchor="end" font-size="13" fill="#f0f0f0" font-family="Liberation Sans">×0.2</text>
</svg>
</body></html>
